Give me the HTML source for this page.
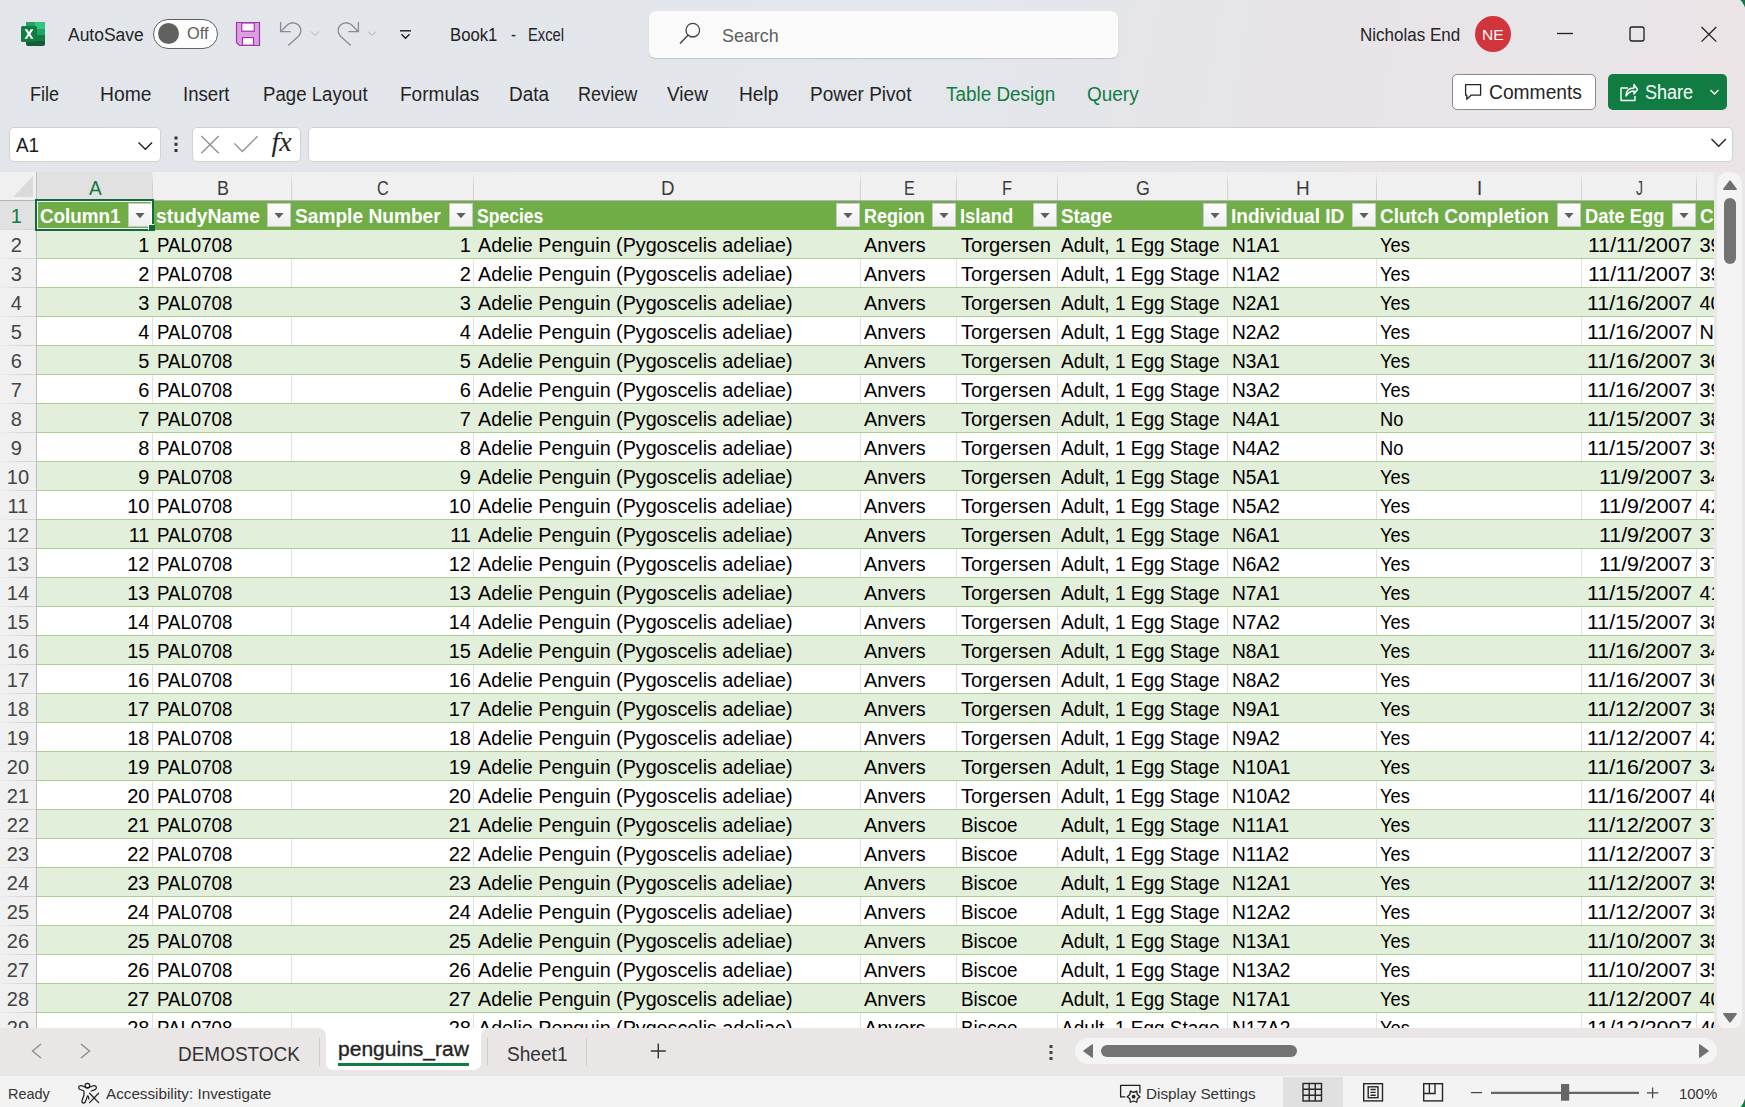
<!DOCTYPE html>
<html><head><meta charset="utf-8">
<style>
html,body{margin:0;padding:0;}
body{width:1745px;height:1107px;overflow:hidden;position:relative;background:#fff;font-family:"Liberation Sans",sans-serif;}
.t{position:absolute;white-space:nowrap;line-height:1;}
.r{position:absolute;}
svg{position:absolute;overflow:visible;}
</style></head><body>

<div class="r" style="left:0;top:0;width:1745px;height:172px;background:linear-gradient(100deg,#e2e5ea 0%,#e3e6eb 55%,#e8e4e8 80%,#eae4e7 100%);"></div>
<svg style="left:0;top:0" width="60" height="60">
<rect x="26" y="22" width="19" height="24" rx="2" fill="#185c37"/>
<rect x="26" y="22" width="19" height="7" rx="2" fill="#33c481"/>
<rect x="26" y="26" width="19" height="3" fill="#33c481"/>
<rect x="26" y="22" width="9" height="7" fill="#21a366"/>
<rect x="26" y="29" width="19" height="6" fill="#21a366"/>
<rect x="26" y="35" width="19" height="6" fill="#107c41"/>
<rect x="21" y="26" width="16" height="16" rx="1.5" fill="#107c41"/>
<path d="M24.6 29.3 L27.3 29.3 L29 32.3 L30.7 29.3 L33.4 29.3 L30.4 34 L33.5 38.7 L30.8 38.7 L29 35.6 L27.2 38.7 L24.5 38.7 L27.6 34 Z" fill="#fff"/>
</svg>
<div class="t" style="top:25.66px;font-size:18px;color:#242424;left:68.30px;transform:scaleX(0.9699);transform-origin:0 0;">AutoSave</div>
<div class="r" style="left:153px;top:19px;width:63px;height:28px;border:1px solid #606060;border-radius:15px;background:#fdfdfd;"></div>
<div class="r" style="left:158px;top:23px;width:21px;height:21px;border-radius:50%;background:#616161;"></div>
<div class="t" style="top:26.06px;font-size:16px;color:#5c5c5c;left:186.50px;transform:scaleX(1.0195);transform-origin:0 0;">Off</div>
<svg style="left:0;top:0" width="1" height="1">
<path d="M236.5 22.5 H259.5 V45.5 H239.5 L236.5 42.5 Z" fill="#d99fe0" stroke="#a233a8" stroke-width="1.2"/>
<rect x="241.7" y="23" width="12.6" height="8.2" fill="#fafafa" stroke="#a233a8" stroke-width="1.2"/>
<rect x="242.5" y="37.6" width="11" height="7.6" fill="#fafafa" stroke="#a233a8" stroke-width="1.2"/>
</svg>
<svg style="left:0;top:0" width="1" height="1">
<g fill="none" stroke="#8c8c8c" stroke-width="1.3">
<path d="M280.6 22 V31.7 H290.6"/>
<path d="M281 31.3 L287 25.3 C290.5 21.8 296 22 299 25.5 C302 29 301.2 33.5 298.5 36.2 L288.2 45.6"/>
<path d="M358.4 22 V31.7 H348.4"/>
<path d="M358 31.3 L352 25.3 C348.5 21.8 343 22 340 25.5 C337 29 337.8 33.5 340.5 36.2 L350.8 45.6"/>
</g>
<g fill="none" stroke="#b0b0b0" stroke-width="1">
<path d="M311 31.5 L315 35.5 L319 31.5"/>
<path d="M368 31.5 L372 35.5 L376 31.5"/>
</g>
<g fill="none" stroke="#1a1a1a" stroke-width="1.4">
<path d="M400 30.8 H411"/>
<path d="M401.5 34.2 L405.5 38.2 L409.5 34.2"/>
</g>
</svg>
<div class="t" style="top:24.92px;font-size:19px;color:#242424;left:450.00px;transform:scaleX(0.8800);transform-origin:0 0;">Book1</div>
<div class="t" style="top:24.92px;font-size:19px;color:#242424;left:511.00px;transform:scaleX(0.7903);transform-origin:0 0;">-</div>
<div class="t" style="top:24.92px;font-size:19px;color:#242424;left:528.30px;transform:scaleX(0.7771);transform-origin:0 0;">Excel</div>
<div class="r" style="left:649px;top:11px;width:469px;height:46.5px;background:#fafafa;border-radius:6px;box-shadow:0 1px 1px rgba(0,0,0,0.16),0 0 0.5px rgba(0,0,0,0.18);"></div>
<svg style="left:0;top:0" width="1" height="1">
<circle cx="692.8" cy="30.2" r="6.8" fill="none" stroke="#444" stroke-width="1.3"/>
<path d="M688 35.2 L680 43.6" stroke="#444" stroke-width="1.4" fill="none"/>
</svg>
<div class="t" style="top:25.82px;font-size:19px;color:#5e5e5e;left:722.00px;transform:scaleX(0.9420);transform-origin:0 0;">Search</div>
<div class="t" style="top:25.12px;font-size:19px;color:#242424;left:1359.70px;transform:scaleX(0.8942);transform-origin:0 0;">Nicholas End</div>
<div class="r" style="left:1475px;top:16px;width:36px;height:36px;border-radius:50%;background:#d1343a;"></div>
<div class="t" style="top:26.90px;font-size:15px;color:#fff;left:1482.20px;transform:scaleX(1.0367);transform-origin:0 0;">NE</div>
<svg style="left:0;top:0" width="1" height="1">
<path d="M1557 33.5 H1573" stroke="#1f1f1f" stroke-width="1.3"/>
<rect x="1630" y="27" width="14" height="14" rx="2" fill="none" stroke="#1f1f1f" stroke-width="1.3"/>
<path d="M1701.5 27 L1716.3 41.6 M1716.3 27 L1701.5 41.6" stroke="#1f1f1f" stroke-width="1.3"/>
</svg>
<div class="t" style="top:84.17px;font-size:20px;color:#242424;left:30.00px;transform:scaleX(0.9001);transform-origin:0 0;">File</div>
<div class="t" style="top:84.17px;font-size:20px;color:#242424;left:99.50px;transform:scaleX(0.9651);transform-origin:0 0;">Home</div>
<div class="t" style="top:84.17px;font-size:20px;color:#242424;left:182.50px;transform:scaleX(0.9296);transform-origin:0 0;">Insert</div>
<div class="t" style="top:84.17px;font-size:20px;color:#242424;left:262.70px;transform:scaleX(0.9313);transform-origin:0 0;">Page Layout</div>
<div class="t" style="top:84.17px;font-size:20px;color:#242424;left:399.70px;transform:scaleX(0.9513);transform-origin:0 0;">Formulas</div>
<div class="t" style="top:84.17px;font-size:20px;color:#242424;left:508.50px;transform:scaleX(0.9465);transform-origin:0 0;">Data</div>
<div class="t" style="top:84.17px;font-size:20px;color:#242424;left:577.70px;transform:scaleX(0.9034);transform-origin:0 0;">Review</div>
<div class="t" style="top:84.17px;font-size:20px;color:#242424;left:667.30px;transform:scaleX(0.9503);transform-origin:0 0;">View</div>
<div class="t" style="top:84.17px;font-size:20px;color:#242424;left:739.00px;transform:scaleX(0.9577);transform-origin:0 0;">Help</div>
<div class="t" style="top:84.17px;font-size:20px;color:#242424;left:810.00px;transform:scaleX(0.9503);transform-origin:0 0;">Power Pivot</div>
<div class="t" style="top:84.17px;font-size:20px;color:#107c41;left:945.50px;transform:scaleX(0.9453);transform-origin:0 0;">Table Design</div>
<div class="t" style="top:84.17px;font-size:20px;color:#107c41;left:1086.80px;transform:scaleX(0.9475);transform-origin:0 0;">Query</div>
<div class="r" style="left:1452px;top:74px;width:142px;height:34px;border:1px solid #8a8a8a;border-radius:5px;background:#fff;"></div>
<svg style="left:0;top:0" width="1" height="1">
<path d="M1465.6 84.6 H1480.6 V95.2 H1471 L1466.8 99.2 V95.2 H1465.6 Z" fill="none" stroke="#242424" stroke-width="1.3" stroke-linejoin="round"/>
</svg>
<div class="t" style="top:83.09px;font-size:19.5px;color:#242424;left:1488.60px;transform:scaleX(0.9864);transform-origin:0 0;">Comments</div>
<div class="r" style="left:1608px;top:74px;width:119px;height:36px;border-radius:5px;background:#107c41;"></div>
<svg style="left:0;top:0" width="1" height="1">
<g fill="none" stroke="#fff" stroke-width="1.4" stroke-linejoin="round">
<path d="M1628 88 H1621 V100.5 H1635 V96"/>
<path d="M1626 96 C1626 90 1630 88 1634 88 V84.5 L1637.5 89.5 L1634 94 V91 C1630.5 91 1628 93 1626 96 Z"/>
</g>
<path d="M1710.5 90 L1714.5 94 L1718.5 90" fill="none" stroke="#fff" stroke-width="1.4"/>
</svg>
<div class="t" style="top:83.09px;font-size:19.5px;color:#fff;left:1644.50px;transform:scaleX(0.9245);transform-origin:0 0;">Share</div>
<div class="r" style="left:9px;top:127px;width:150px;height:33px;border:1px solid #d2d2d2;border-radius:5px;background:#fff;"></div>
<div class="t" style="top:134.97px;font-size:20px;color:#1a1a1a;left:16.00px;transform:scaleX(0.9444);transform-origin:0 0;">A1</div>
<svg style="left:0;top:0" width="1" height="1">
<path d="M138.5 142.5 L145.3 149.3 L152.1 142.5" fill="none" stroke="#242424" stroke-width="1.4"/>
<rect x="174.5" y="136.5" width="3" height="3" fill="#333"/>
<rect x="174.5" y="142.8" width="3" height="3" fill="#333"/>
<rect x="174.5" y="149" width="3" height="3" fill="#333"/>
</svg>
<div class="r" style="left:192px;top:127px;width:107px;height:33px;border:1px solid #d2d2d2;border-radius:5px;background:#fff;"></div>
<svg style="left:0;top:0" width="1" height="1">
<path d="M201.3 136 L218.8 153.3 M218.8 136 L201.3 153.3" stroke="#8f8f8f" stroke-width="1.3"/>
<path d="M234.3 143.4 L242.3 151.5 L257.6 136.2" fill="none" stroke="#8f8f8f" stroke-width="1.3"/>
</svg>
<div class="t" style="left:271.5px;top:127.7px;font-family:'Liberation Serif',serif;font-style:italic;font-size:28px;color:#242424;">fx</div>
<div class="r" style="left:308px;top:127px;width:1423px;height:33px;border:1px solid #d2d2d2;border-radius:5px;background:#fff;"></div>
<svg style="left:0;top:0" width="1" height="1">
<path d="M1711.5 139 L1718.7 146.2 L1725.9 139" fill="none" stroke="#242424" stroke-width="1.4"/>
</svg>
<div class="r" style="left:0;top:172px;width:1714px;height:856px;background:#fff;overflow:hidden;">
<div class="r" style="left:0;top:-172px;width:1745px;height:1107px;">
<div class="r" style="left:0px;top:172px;width:1714px;height:28px;background:#f0f0f0;"></div>
<div class="r" style="left:36px;top:172px;width:116px;height:28px;background:#e1e1e1;"></div>
<div class="r" style="left:0px;top:200px;width:1714px;height:1px;background:#b4b4b4;"></div>
<div class="r" style="left:0px;top:201px;width:36px;height:827px;background:#f0f0f0;"></div>
<div class="r" style="left:0px;top:201px;width:36px;height:29px;background:#e1e1e1;"></div>
<svg style="left:0;top:0" width="1" height="1"><path d="M13 197 L33 197 L33 176 Z" fill="#dadada"/></svg>
<div class="r" style="left:152px;top:172px;width:1px;height:28px;background:linear-gradient(rgba(210,210,210,0),#d2d2d2 45%);"></div>
<div class="r" style="left:291px;top:172px;width:1px;height:28px;background:linear-gradient(rgba(210,210,210,0),#d2d2d2 45%);"></div>
<div class="r" style="left:473px;top:172px;width:1px;height:28px;background:linear-gradient(rgba(210,210,210,0),#d2d2d2 45%);"></div>
<div class="r" style="left:860px;top:172px;width:1px;height:28px;background:linear-gradient(rgba(210,210,210,0),#d2d2d2 45%);"></div>
<div class="r" style="left:956px;top:172px;width:1px;height:28px;background:linear-gradient(rgba(210,210,210,0),#d2d2d2 45%);"></div>
<div class="r" style="left:1057px;top:172px;width:1px;height:28px;background:linear-gradient(rgba(210,210,210,0),#d2d2d2 45%);"></div>
<div class="r" style="left:1227px;top:172px;width:1px;height:28px;background:linear-gradient(rgba(210,210,210,0),#d2d2d2 45%);"></div>
<div class="r" style="left:1376px;top:172px;width:1px;height:28px;background:linear-gradient(rgba(210,210,210,0),#d2d2d2 45%);"></div>
<div class="r" style="left:1581px;top:172px;width:1px;height:28px;background:linear-gradient(rgba(210,210,210,0),#d2d2d2 45%);"></div>
<div class="r" style="left:1696px;top:172px;width:1px;height:28px;background:linear-gradient(rgba(210,210,210,0),#d2d2d2 45%);"></div>
<div class="r" style="left:36px;top:172px;width:1px;height:856px;background:#bdbdbd;"></div>
<div class="t" style="top:177.87px;font-size:20px;color:#107c41;left:88.63px;transform:scaleX(0.9549);transform-origin:0 0;">A</div>
<div class="t" style="top:177.87px;font-size:20px;color:#3c3c3c;left:216.52px;transform:scaleX(0.8972);transform-origin:0 0;">B</div>
<div class="t" style="top:177.87px;font-size:20px;color:#3c3c3c;left:377.14px;transform:scaleX(0.8119);transform-origin:0 0;">C</div>
<div class="t" style="top:177.87px;font-size:20px;color:#3c3c3c;left:660.74px;transform:scaleX(0.9368);transform-origin:0 0;">D</div>
<div class="t" style="top:177.87px;font-size:20px;color:#3c3c3c;left:903.63px;transform:scaleX(0.8048);transform-origin:0 0;">E</div>
<div class="t" style="top:177.87px;font-size:20px;color:#3c3c3c;left:1002.45px;transform:scaleX(0.8266);transform-origin:0 0;">F</div>
<div class="t" style="top:177.87px;font-size:20px;color:#3c3c3c;left:1136.06px;transform:scaleX(0.8924);transform-origin:0 0;">G</div>
<div class="t" style="top:177.87px;font-size:20px;color:#3c3c3c;left:1295.65px;transform:scaleX(0.9489);transform-origin:0 0;">H</div>
<div class="t" style="top:177.87px;font-size:20px;color:#3c3c3c;left:1476.73px;">I</div>
<div class="t" style="top:177.87px;font-size:20px;color:#3c3c3c;left:1635.99px;transform:scaleX(0.7018);transform-origin:0 0;">J</div>
<div class="r" style="left:0px;top:229px;width:36px;height:1px;background:linear-gradient(90deg,rgba(212,212,212,0.15),#d4d4d4 70%);"></div>
<div class="t" style="top:206.07px;font-size:20px;color:#107c41;left:10.84px;">1</div>
<div class="r" style="left:37px;top:201px;width:1677px;height:29px;background:#70ad47;"></div>
<div class="r" style="left:0px;top:258px;width:36px;height:1px;background:linear-gradient(90deg,rgba(212,212,212,0.15),#d4d4d4 70%);"></div>
<div class="t" style="top:235.07px;font-size:20px;color:#444444;left:10.84px;">2</div>
<div class="r" style="left:37px;top:230px;width:1677px;height:28px;background:#e2efda;"></div>
<div class="r" style="left:37px;top:258px;width:1677px;height:1px;background:#a9d08e;"></div>
<div class="r" style="left:0px;top:287px;width:36px;height:1px;background:linear-gradient(90deg,rgba(212,212,212,0.15),#d4d4d4 70%);"></div>
<div class="t" style="top:264.07px;font-size:20px;color:#444444;left:10.84px;">3</div>
<div class="r" style="left:37px;top:259px;width:1677px;height:28px;background:#ffffff;"></div>
<div class="r" style="left:37px;top:287px;width:1677px;height:1px;background:#a9d08e;"></div>
<div class="r" style="left:152px;top:259px;width:1px;height:28px;background:#e1e1e1;"></div>
<div class="r" style="left:291px;top:259px;width:1px;height:28px;background:#e1e1e1;"></div>
<div class="r" style="left:473px;top:259px;width:1px;height:28px;background:#e1e1e1;"></div>
<div class="r" style="left:860px;top:259px;width:1px;height:28px;background:#e1e1e1;"></div>
<div class="r" style="left:956px;top:259px;width:1px;height:28px;background:#e1e1e1;"></div>
<div class="r" style="left:1057px;top:259px;width:1px;height:28px;background:#e1e1e1;"></div>
<div class="r" style="left:1227px;top:259px;width:1px;height:28px;background:#e1e1e1;"></div>
<div class="r" style="left:1376px;top:259px;width:1px;height:28px;background:#e1e1e1;"></div>
<div class="r" style="left:1581px;top:259px;width:1px;height:28px;background:#e1e1e1;"></div>
<div class="r" style="left:1696px;top:259px;width:1px;height:28px;background:#e1e1e1;"></div>
<div class="r" style="left:0px;top:316px;width:36px;height:1px;background:linear-gradient(90deg,rgba(212,212,212,0.15),#d4d4d4 70%);"></div>
<div class="t" style="top:293.07px;font-size:20px;color:#444444;left:10.84px;">4</div>
<div class="r" style="left:37px;top:288px;width:1677px;height:28px;background:#e2efda;"></div>
<div class="r" style="left:37px;top:316px;width:1677px;height:1px;background:#a9d08e;"></div>
<div class="r" style="left:0px;top:345px;width:36px;height:1px;background:linear-gradient(90deg,rgba(212,212,212,0.15),#d4d4d4 70%);"></div>
<div class="t" style="top:322.07px;font-size:20px;color:#444444;left:10.84px;">5</div>
<div class="r" style="left:37px;top:317px;width:1677px;height:28px;background:#ffffff;"></div>
<div class="r" style="left:37px;top:345px;width:1677px;height:1px;background:#a9d08e;"></div>
<div class="r" style="left:152px;top:317px;width:1px;height:28px;background:#e1e1e1;"></div>
<div class="r" style="left:291px;top:317px;width:1px;height:28px;background:#e1e1e1;"></div>
<div class="r" style="left:473px;top:317px;width:1px;height:28px;background:#e1e1e1;"></div>
<div class="r" style="left:860px;top:317px;width:1px;height:28px;background:#e1e1e1;"></div>
<div class="r" style="left:956px;top:317px;width:1px;height:28px;background:#e1e1e1;"></div>
<div class="r" style="left:1057px;top:317px;width:1px;height:28px;background:#e1e1e1;"></div>
<div class="r" style="left:1227px;top:317px;width:1px;height:28px;background:#e1e1e1;"></div>
<div class="r" style="left:1376px;top:317px;width:1px;height:28px;background:#e1e1e1;"></div>
<div class="r" style="left:1581px;top:317px;width:1px;height:28px;background:#e1e1e1;"></div>
<div class="r" style="left:1696px;top:317px;width:1px;height:28px;background:#e1e1e1;"></div>
<div class="r" style="left:0px;top:374px;width:36px;height:1px;background:linear-gradient(90deg,rgba(212,212,212,0.15),#d4d4d4 70%);"></div>
<div class="t" style="top:351.07px;font-size:20px;color:#444444;left:10.84px;">6</div>
<div class="r" style="left:37px;top:346px;width:1677px;height:28px;background:#e2efda;"></div>
<div class="r" style="left:37px;top:374px;width:1677px;height:1px;background:#a9d08e;"></div>
<div class="r" style="left:0px;top:403px;width:36px;height:1px;background:linear-gradient(90deg,rgba(212,212,212,0.15),#d4d4d4 70%);"></div>
<div class="t" style="top:380.07px;font-size:20px;color:#444444;left:10.84px;">7</div>
<div class="r" style="left:37px;top:375px;width:1677px;height:28px;background:#ffffff;"></div>
<div class="r" style="left:37px;top:403px;width:1677px;height:1px;background:#a9d08e;"></div>
<div class="r" style="left:152px;top:375px;width:1px;height:28px;background:#e1e1e1;"></div>
<div class="r" style="left:291px;top:375px;width:1px;height:28px;background:#e1e1e1;"></div>
<div class="r" style="left:473px;top:375px;width:1px;height:28px;background:#e1e1e1;"></div>
<div class="r" style="left:860px;top:375px;width:1px;height:28px;background:#e1e1e1;"></div>
<div class="r" style="left:956px;top:375px;width:1px;height:28px;background:#e1e1e1;"></div>
<div class="r" style="left:1057px;top:375px;width:1px;height:28px;background:#e1e1e1;"></div>
<div class="r" style="left:1227px;top:375px;width:1px;height:28px;background:#e1e1e1;"></div>
<div class="r" style="left:1376px;top:375px;width:1px;height:28px;background:#e1e1e1;"></div>
<div class="r" style="left:1581px;top:375px;width:1px;height:28px;background:#e1e1e1;"></div>
<div class="r" style="left:1696px;top:375px;width:1px;height:28px;background:#e1e1e1;"></div>
<div class="r" style="left:0px;top:432px;width:36px;height:1px;background:linear-gradient(90deg,rgba(212,212,212,0.15),#d4d4d4 70%);"></div>
<div class="t" style="top:409.07px;font-size:20px;color:#444444;left:10.84px;">8</div>
<div class="r" style="left:37px;top:404px;width:1677px;height:28px;background:#e2efda;"></div>
<div class="r" style="left:37px;top:432px;width:1677px;height:1px;background:#a9d08e;"></div>
<div class="r" style="left:0px;top:461px;width:36px;height:1px;background:linear-gradient(90deg,rgba(212,212,212,0.15),#d4d4d4 70%);"></div>
<div class="t" style="top:438.07px;font-size:20px;color:#444444;left:10.84px;">9</div>
<div class="r" style="left:37px;top:433px;width:1677px;height:28px;background:#ffffff;"></div>
<div class="r" style="left:37px;top:461px;width:1677px;height:1px;background:#a9d08e;"></div>
<div class="r" style="left:152px;top:433px;width:1px;height:28px;background:#e1e1e1;"></div>
<div class="r" style="left:291px;top:433px;width:1px;height:28px;background:#e1e1e1;"></div>
<div class="r" style="left:473px;top:433px;width:1px;height:28px;background:#e1e1e1;"></div>
<div class="r" style="left:860px;top:433px;width:1px;height:28px;background:#e1e1e1;"></div>
<div class="r" style="left:956px;top:433px;width:1px;height:28px;background:#e1e1e1;"></div>
<div class="r" style="left:1057px;top:433px;width:1px;height:28px;background:#e1e1e1;"></div>
<div class="r" style="left:1227px;top:433px;width:1px;height:28px;background:#e1e1e1;"></div>
<div class="r" style="left:1376px;top:433px;width:1px;height:28px;background:#e1e1e1;"></div>
<div class="r" style="left:1581px;top:433px;width:1px;height:28px;background:#e1e1e1;"></div>
<div class="r" style="left:1696px;top:433px;width:1px;height:28px;background:#e1e1e1;"></div>
<div class="r" style="left:0px;top:490px;width:36px;height:1px;background:linear-gradient(90deg,rgba(212,212,212,0.15),#d4d4d4 70%);"></div>
<div class="t" style="top:467.07px;font-size:20px;color:#444444;left:6.78px;">10</div>
<div class="r" style="left:37px;top:462px;width:1677px;height:28px;background:#e2efda;"></div>
<div class="r" style="left:37px;top:490px;width:1677px;height:1px;background:#a9d08e;"></div>
<div class="r" style="left:0px;top:519px;width:36px;height:1px;background:linear-gradient(90deg,rgba(212,212,212,0.15),#d4d4d4 70%);"></div>
<div class="t" style="top:496.07px;font-size:20px;color:#444444;left:7.52px;">11</div>
<div class="r" style="left:37px;top:491px;width:1677px;height:28px;background:#ffffff;"></div>
<div class="r" style="left:37px;top:519px;width:1677px;height:1px;background:#a9d08e;"></div>
<div class="r" style="left:152px;top:491px;width:1px;height:28px;background:#e1e1e1;"></div>
<div class="r" style="left:291px;top:491px;width:1px;height:28px;background:#e1e1e1;"></div>
<div class="r" style="left:473px;top:491px;width:1px;height:28px;background:#e1e1e1;"></div>
<div class="r" style="left:860px;top:491px;width:1px;height:28px;background:#e1e1e1;"></div>
<div class="r" style="left:956px;top:491px;width:1px;height:28px;background:#e1e1e1;"></div>
<div class="r" style="left:1057px;top:491px;width:1px;height:28px;background:#e1e1e1;"></div>
<div class="r" style="left:1227px;top:491px;width:1px;height:28px;background:#e1e1e1;"></div>
<div class="r" style="left:1376px;top:491px;width:1px;height:28px;background:#e1e1e1;"></div>
<div class="r" style="left:1581px;top:491px;width:1px;height:28px;background:#e1e1e1;"></div>
<div class="r" style="left:1696px;top:491px;width:1px;height:28px;background:#e1e1e1;"></div>
<div class="r" style="left:0px;top:548px;width:36px;height:1px;background:linear-gradient(90deg,rgba(212,212,212,0.15),#d4d4d4 70%);"></div>
<div class="t" style="top:525.07px;font-size:20px;color:#444444;left:6.78px;">12</div>
<div class="r" style="left:37px;top:520px;width:1677px;height:28px;background:#e2efda;"></div>
<div class="r" style="left:37px;top:548px;width:1677px;height:1px;background:#a9d08e;"></div>
<div class="r" style="left:0px;top:577px;width:36px;height:1px;background:linear-gradient(90deg,rgba(212,212,212,0.15),#d4d4d4 70%);"></div>
<div class="t" style="top:554.07px;font-size:20px;color:#444444;left:6.78px;">13</div>
<div class="r" style="left:37px;top:549px;width:1677px;height:28px;background:#ffffff;"></div>
<div class="r" style="left:37px;top:577px;width:1677px;height:1px;background:#a9d08e;"></div>
<div class="r" style="left:152px;top:549px;width:1px;height:28px;background:#e1e1e1;"></div>
<div class="r" style="left:291px;top:549px;width:1px;height:28px;background:#e1e1e1;"></div>
<div class="r" style="left:473px;top:549px;width:1px;height:28px;background:#e1e1e1;"></div>
<div class="r" style="left:860px;top:549px;width:1px;height:28px;background:#e1e1e1;"></div>
<div class="r" style="left:956px;top:549px;width:1px;height:28px;background:#e1e1e1;"></div>
<div class="r" style="left:1057px;top:549px;width:1px;height:28px;background:#e1e1e1;"></div>
<div class="r" style="left:1227px;top:549px;width:1px;height:28px;background:#e1e1e1;"></div>
<div class="r" style="left:1376px;top:549px;width:1px;height:28px;background:#e1e1e1;"></div>
<div class="r" style="left:1581px;top:549px;width:1px;height:28px;background:#e1e1e1;"></div>
<div class="r" style="left:1696px;top:549px;width:1px;height:28px;background:#e1e1e1;"></div>
<div class="r" style="left:0px;top:606px;width:36px;height:1px;background:linear-gradient(90deg,rgba(212,212,212,0.15),#d4d4d4 70%);"></div>
<div class="t" style="top:583.07px;font-size:20px;color:#444444;left:6.78px;">14</div>
<div class="r" style="left:37px;top:578px;width:1677px;height:28px;background:#e2efda;"></div>
<div class="r" style="left:37px;top:606px;width:1677px;height:1px;background:#a9d08e;"></div>
<div class="r" style="left:0px;top:635px;width:36px;height:1px;background:linear-gradient(90deg,rgba(212,212,212,0.15),#d4d4d4 70%);"></div>
<div class="t" style="top:612.07px;font-size:20px;color:#444444;left:6.78px;">15</div>
<div class="r" style="left:37px;top:607px;width:1677px;height:28px;background:#ffffff;"></div>
<div class="r" style="left:37px;top:635px;width:1677px;height:1px;background:#a9d08e;"></div>
<div class="r" style="left:152px;top:607px;width:1px;height:28px;background:#e1e1e1;"></div>
<div class="r" style="left:291px;top:607px;width:1px;height:28px;background:#e1e1e1;"></div>
<div class="r" style="left:473px;top:607px;width:1px;height:28px;background:#e1e1e1;"></div>
<div class="r" style="left:860px;top:607px;width:1px;height:28px;background:#e1e1e1;"></div>
<div class="r" style="left:956px;top:607px;width:1px;height:28px;background:#e1e1e1;"></div>
<div class="r" style="left:1057px;top:607px;width:1px;height:28px;background:#e1e1e1;"></div>
<div class="r" style="left:1227px;top:607px;width:1px;height:28px;background:#e1e1e1;"></div>
<div class="r" style="left:1376px;top:607px;width:1px;height:28px;background:#e1e1e1;"></div>
<div class="r" style="left:1581px;top:607px;width:1px;height:28px;background:#e1e1e1;"></div>
<div class="r" style="left:1696px;top:607px;width:1px;height:28px;background:#e1e1e1;"></div>
<div class="r" style="left:0px;top:664px;width:36px;height:1px;background:linear-gradient(90deg,rgba(212,212,212,0.15),#d4d4d4 70%);"></div>
<div class="t" style="top:641.07px;font-size:20px;color:#444444;left:6.78px;">16</div>
<div class="r" style="left:37px;top:636px;width:1677px;height:28px;background:#e2efda;"></div>
<div class="r" style="left:37px;top:664px;width:1677px;height:1px;background:#a9d08e;"></div>
<div class="r" style="left:0px;top:693px;width:36px;height:1px;background:linear-gradient(90deg,rgba(212,212,212,0.15),#d4d4d4 70%);"></div>
<div class="t" style="top:670.07px;font-size:20px;color:#444444;left:6.78px;">17</div>
<div class="r" style="left:37px;top:665px;width:1677px;height:28px;background:#ffffff;"></div>
<div class="r" style="left:37px;top:693px;width:1677px;height:1px;background:#a9d08e;"></div>
<div class="r" style="left:152px;top:665px;width:1px;height:28px;background:#e1e1e1;"></div>
<div class="r" style="left:291px;top:665px;width:1px;height:28px;background:#e1e1e1;"></div>
<div class="r" style="left:473px;top:665px;width:1px;height:28px;background:#e1e1e1;"></div>
<div class="r" style="left:860px;top:665px;width:1px;height:28px;background:#e1e1e1;"></div>
<div class="r" style="left:956px;top:665px;width:1px;height:28px;background:#e1e1e1;"></div>
<div class="r" style="left:1057px;top:665px;width:1px;height:28px;background:#e1e1e1;"></div>
<div class="r" style="left:1227px;top:665px;width:1px;height:28px;background:#e1e1e1;"></div>
<div class="r" style="left:1376px;top:665px;width:1px;height:28px;background:#e1e1e1;"></div>
<div class="r" style="left:1581px;top:665px;width:1px;height:28px;background:#e1e1e1;"></div>
<div class="r" style="left:1696px;top:665px;width:1px;height:28px;background:#e1e1e1;"></div>
<div class="r" style="left:0px;top:722px;width:36px;height:1px;background:linear-gradient(90deg,rgba(212,212,212,0.15),#d4d4d4 70%);"></div>
<div class="t" style="top:699.07px;font-size:20px;color:#444444;left:6.78px;">18</div>
<div class="r" style="left:37px;top:694px;width:1677px;height:28px;background:#e2efda;"></div>
<div class="r" style="left:37px;top:722px;width:1677px;height:1px;background:#a9d08e;"></div>
<div class="r" style="left:0px;top:751px;width:36px;height:1px;background:linear-gradient(90deg,rgba(212,212,212,0.15),#d4d4d4 70%);"></div>
<div class="t" style="top:728.07px;font-size:20px;color:#444444;left:6.78px;">19</div>
<div class="r" style="left:37px;top:723px;width:1677px;height:28px;background:#ffffff;"></div>
<div class="r" style="left:37px;top:751px;width:1677px;height:1px;background:#a9d08e;"></div>
<div class="r" style="left:152px;top:723px;width:1px;height:28px;background:#e1e1e1;"></div>
<div class="r" style="left:291px;top:723px;width:1px;height:28px;background:#e1e1e1;"></div>
<div class="r" style="left:473px;top:723px;width:1px;height:28px;background:#e1e1e1;"></div>
<div class="r" style="left:860px;top:723px;width:1px;height:28px;background:#e1e1e1;"></div>
<div class="r" style="left:956px;top:723px;width:1px;height:28px;background:#e1e1e1;"></div>
<div class="r" style="left:1057px;top:723px;width:1px;height:28px;background:#e1e1e1;"></div>
<div class="r" style="left:1227px;top:723px;width:1px;height:28px;background:#e1e1e1;"></div>
<div class="r" style="left:1376px;top:723px;width:1px;height:28px;background:#e1e1e1;"></div>
<div class="r" style="left:1581px;top:723px;width:1px;height:28px;background:#e1e1e1;"></div>
<div class="r" style="left:1696px;top:723px;width:1px;height:28px;background:#e1e1e1;"></div>
<div class="r" style="left:0px;top:780px;width:36px;height:1px;background:linear-gradient(90deg,rgba(212,212,212,0.15),#d4d4d4 70%);"></div>
<div class="t" style="top:757.07px;font-size:20px;color:#444444;left:6.78px;">20</div>
<div class="r" style="left:37px;top:752px;width:1677px;height:28px;background:#e2efda;"></div>
<div class="r" style="left:37px;top:780px;width:1677px;height:1px;background:#a9d08e;"></div>
<div class="r" style="left:0px;top:809px;width:36px;height:1px;background:linear-gradient(90deg,rgba(212,212,212,0.15),#d4d4d4 70%);"></div>
<div class="t" style="top:786.07px;font-size:20px;color:#444444;left:6.78px;">21</div>
<div class="r" style="left:37px;top:781px;width:1677px;height:28px;background:#ffffff;"></div>
<div class="r" style="left:37px;top:809px;width:1677px;height:1px;background:#a9d08e;"></div>
<div class="r" style="left:152px;top:781px;width:1px;height:28px;background:#e1e1e1;"></div>
<div class="r" style="left:291px;top:781px;width:1px;height:28px;background:#e1e1e1;"></div>
<div class="r" style="left:473px;top:781px;width:1px;height:28px;background:#e1e1e1;"></div>
<div class="r" style="left:860px;top:781px;width:1px;height:28px;background:#e1e1e1;"></div>
<div class="r" style="left:956px;top:781px;width:1px;height:28px;background:#e1e1e1;"></div>
<div class="r" style="left:1057px;top:781px;width:1px;height:28px;background:#e1e1e1;"></div>
<div class="r" style="left:1227px;top:781px;width:1px;height:28px;background:#e1e1e1;"></div>
<div class="r" style="left:1376px;top:781px;width:1px;height:28px;background:#e1e1e1;"></div>
<div class="r" style="left:1581px;top:781px;width:1px;height:28px;background:#e1e1e1;"></div>
<div class="r" style="left:1696px;top:781px;width:1px;height:28px;background:#e1e1e1;"></div>
<div class="r" style="left:0px;top:838px;width:36px;height:1px;background:linear-gradient(90deg,rgba(212,212,212,0.15),#d4d4d4 70%);"></div>
<div class="t" style="top:815.07px;font-size:20px;color:#444444;left:6.78px;">22</div>
<div class="r" style="left:37px;top:810px;width:1677px;height:28px;background:#e2efda;"></div>
<div class="r" style="left:37px;top:838px;width:1677px;height:1px;background:#a9d08e;"></div>
<div class="r" style="left:0px;top:867px;width:36px;height:1px;background:linear-gradient(90deg,rgba(212,212,212,0.15),#d4d4d4 70%);"></div>
<div class="t" style="top:844.07px;font-size:20px;color:#444444;left:6.78px;">23</div>
<div class="r" style="left:37px;top:839px;width:1677px;height:28px;background:#ffffff;"></div>
<div class="r" style="left:37px;top:867px;width:1677px;height:1px;background:#a9d08e;"></div>
<div class="r" style="left:152px;top:839px;width:1px;height:28px;background:#e1e1e1;"></div>
<div class="r" style="left:291px;top:839px;width:1px;height:28px;background:#e1e1e1;"></div>
<div class="r" style="left:473px;top:839px;width:1px;height:28px;background:#e1e1e1;"></div>
<div class="r" style="left:860px;top:839px;width:1px;height:28px;background:#e1e1e1;"></div>
<div class="r" style="left:956px;top:839px;width:1px;height:28px;background:#e1e1e1;"></div>
<div class="r" style="left:1057px;top:839px;width:1px;height:28px;background:#e1e1e1;"></div>
<div class="r" style="left:1227px;top:839px;width:1px;height:28px;background:#e1e1e1;"></div>
<div class="r" style="left:1376px;top:839px;width:1px;height:28px;background:#e1e1e1;"></div>
<div class="r" style="left:1581px;top:839px;width:1px;height:28px;background:#e1e1e1;"></div>
<div class="r" style="left:1696px;top:839px;width:1px;height:28px;background:#e1e1e1;"></div>
<div class="r" style="left:0px;top:896px;width:36px;height:1px;background:linear-gradient(90deg,rgba(212,212,212,0.15),#d4d4d4 70%);"></div>
<div class="t" style="top:873.07px;font-size:20px;color:#444444;left:6.78px;">24</div>
<div class="r" style="left:37px;top:868px;width:1677px;height:28px;background:#e2efda;"></div>
<div class="r" style="left:37px;top:896px;width:1677px;height:1px;background:#a9d08e;"></div>
<div class="r" style="left:0px;top:925px;width:36px;height:1px;background:linear-gradient(90deg,rgba(212,212,212,0.15),#d4d4d4 70%);"></div>
<div class="t" style="top:902.07px;font-size:20px;color:#444444;left:6.78px;">25</div>
<div class="r" style="left:37px;top:897px;width:1677px;height:28px;background:#ffffff;"></div>
<div class="r" style="left:37px;top:925px;width:1677px;height:1px;background:#a9d08e;"></div>
<div class="r" style="left:152px;top:897px;width:1px;height:28px;background:#e1e1e1;"></div>
<div class="r" style="left:291px;top:897px;width:1px;height:28px;background:#e1e1e1;"></div>
<div class="r" style="left:473px;top:897px;width:1px;height:28px;background:#e1e1e1;"></div>
<div class="r" style="left:860px;top:897px;width:1px;height:28px;background:#e1e1e1;"></div>
<div class="r" style="left:956px;top:897px;width:1px;height:28px;background:#e1e1e1;"></div>
<div class="r" style="left:1057px;top:897px;width:1px;height:28px;background:#e1e1e1;"></div>
<div class="r" style="left:1227px;top:897px;width:1px;height:28px;background:#e1e1e1;"></div>
<div class="r" style="left:1376px;top:897px;width:1px;height:28px;background:#e1e1e1;"></div>
<div class="r" style="left:1581px;top:897px;width:1px;height:28px;background:#e1e1e1;"></div>
<div class="r" style="left:1696px;top:897px;width:1px;height:28px;background:#e1e1e1;"></div>
<div class="r" style="left:0px;top:954px;width:36px;height:1px;background:linear-gradient(90deg,rgba(212,212,212,0.15),#d4d4d4 70%);"></div>
<div class="t" style="top:931.07px;font-size:20px;color:#444444;left:6.78px;">26</div>
<div class="r" style="left:37px;top:926px;width:1677px;height:28px;background:#e2efda;"></div>
<div class="r" style="left:37px;top:954px;width:1677px;height:1px;background:#a9d08e;"></div>
<div class="r" style="left:0px;top:983px;width:36px;height:1px;background:linear-gradient(90deg,rgba(212,212,212,0.15),#d4d4d4 70%);"></div>
<div class="t" style="top:960.07px;font-size:20px;color:#444444;left:6.78px;">27</div>
<div class="r" style="left:37px;top:955px;width:1677px;height:28px;background:#ffffff;"></div>
<div class="r" style="left:37px;top:983px;width:1677px;height:1px;background:#a9d08e;"></div>
<div class="r" style="left:152px;top:955px;width:1px;height:28px;background:#e1e1e1;"></div>
<div class="r" style="left:291px;top:955px;width:1px;height:28px;background:#e1e1e1;"></div>
<div class="r" style="left:473px;top:955px;width:1px;height:28px;background:#e1e1e1;"></div>
<div class="r" style="left:860px;top:955px;width:1px;height:28px;background:#e1e1e1;"></div>
<div class="r" style="left:956px;top:955px;width:1px;height:28px;background:#e1e1e1;"></div>
<div class="r" style="left:1057px;top:955px;width:1px;height:28px;background:#e1e1e1;"></div>
<div class="r" style="left:1227px;top:955px;width:1px;height:28px;background:#e1e1e1;"></div>
<div class="r" style="left:1376px;top:955px;width:1px;height:28px;background:#e1e1e1;"></div>
<div class="r" style="left:1581px;top:955px;width:1px;height:28px;background:#e1e1e1;"></div>
<div class="r" style="left:1696px;top:955px;width:1px;height:28px;background:#e1e1e1;"></div>
<div class="r" style="left:0px;top:1012px;width:36px;height:1px;background:linear-gradient(90deg,rgba(212,212,212,0.15),#d4d4d4 70%);"></div>
<div class="t" style="top:989.07px;font-size:20px;color:#444444;left:6.78px;">28</div>
<div class="r" style="left:37px;top:984px;width:1677px;height:28px;background:#e2efda;"></div>
<div class="r" style="left:37px;top:1012px;width:1677px;height:1px;background:#a9d08e;"></div>
<div class="r" style="left:0px;top:1041px;width:36px;height:1px;background:linear-gradient(90deg,rgba(212,212,212,0.15),#d4d4d4 70%);"></div>
<div class="t" style="top:1018.07px;font-size:20px;color:#444444;left:6.78px;">29</div>
<div class="r" style="left:37px;top:1013px;width:1677px;height:28px;background:#ffffff;"></div>
<div class="r" style="left:37px;top:1041px;width:1677px;height:1px;background:#a9d08e;"></div>
<div class="r" style="left:152px;top:1013px;width:1px;height:28px;background:#e1e1e1;"></div>
<div class="r" style="left:291px;top:1013px;width:1px;height:28px;background:#e1e1e1;"></div>
<div class="r" style="left:473px;top:1013px;width:1px;height:28px;background:#e1e1e1;"></div>
<div class="r" style="left:860px;top:1013px;width:1px;height:28px;background:#e1e1e1;"></div>
<div class="r" style="left:956px;top:1013px;width:1px;height:28px;background:#e1e1e1;"></div>
<div class="r" style="left:1057px;top:1013px;width:1px;height:28px;background:#e1e1e1;"></div>
<div class="r" style="left:1227px;top:1013px;width:1px;height:28px;background:#e1e1e1;"></div>
<div class="r" style="left:1376px;top:1013px;width:1px;height:28px;background:#e1e1e1;"></div>
<div class="r" style="left:1581px;top:1013px;width:1px;height:28px;background:#e1e1e1;"></div>
<div class="r" style="left:1696px;top:1013px;width:1px;height:28px;background:#e1e1e1;"></div>
<div class="t" style="top:206.07px;font-size:20px;color:#fff;font-weight:bold;left:40.40px;transform:scaleX(0.9409);transform-origin:0 0;">Column1</div>
<div class="r" style="left:128px;top:203px;width:22px;height:22px;border:1px solid #c8c8c8;background:linear-gradient(#fdfdfd,#eeeef2);"></div>
<svg style="left:0;top:0" width="1" height="1"><path d="M135.4 213 L144.6 213 L140.0 218.2 Z" fill="#5f5f5f"/></svg>
<div class="t" style="top:206.07px;font-size:20px;color:#fff;font-weight:bold;left:156.40px;transform:scaleX(0.9636);transform-origin:0 0;">studyName</div>
<div class="r" style="left:267px;top:203px;width:22px;height:22px;border:1px solid #c8c8c8;background:linear-gradient(#fdfdfd,#eeeef2);"></div>
<svg style="left:0;top:0" width="1" height="1"><path d="M274.4 213 L283.6 213 L279.0 218.2 Z" fill="#5f5f5f"/></svg>
<div class="t" style="top:206.07px;font-size:20px;color:#fff;font-weight:bold;left:295.40px;transform:scaleX(0.9569);transform-origin:0 0;">Sample Number</div>
<div class="r" style="left:449px;top:203px;width:22px;height:22px;border:1px solid #c8c8c8;background:linear-gradient(#fdfdfd,#eeeef2);"></div>
<svg style="left:0;top:0" width="1" height="1"><path d="M456.4 213 L465.6 213 L461.0 218.2 Z" fill="#5f5f5f"/></svg>
<div class="t" style="top:206.07px;font-size:20px;color:#fff;font-weight:bold;left:477.40px;transform:scaleX(0.8770);transform-origin:0 0;">Species</div>
<div class="r" style="left:836px;top:203px;width:22px;height:22px;border:1px solid #c8c8c8;background:linear-gradient(#fdfdfd,#eeeef2);"></div>
<svg style="left:0;top:0" width="1" height="1"><path d="M843.4 213 L852.6 213 L848.0 218.2 Z" fill="#5f5f5f"/></svg>
<div class="t" style="top:206.07px;font-size:20px;color:#fff;font-weight:bold;left:864.40px;transform:scaleX(0.8970);transform-origin:0 0;">Region</div>
<div class="r" style="left:932px;top:203px;width:22px;height:22px;border:1px solid #c8c8c8;background:linear-gradient(#fdfdfd,#eeeef2);"></div>
<svg style="left:0;top:0" width="1" height="1"><path d="M939.4 213 L948.6 213 L944.0 218.2 Z" fill="#5f5f5f"/></svg>
<div class="t" style="top:206.07px;font-size:20px;color:#fff;font-weight:bold;left:960.40px;transform:scaleX(0.9204);transform-origin:0 0;">Island</div>
<div class="r" style="left:1033px;top:203px;width:22px;height:22px;border:1px solid #c8c8c8;background:linear-gradient(#fdfdfd,#eeeef2);"></div>
<svg style="left:0;top:0" width="1" height="1"><path d="M1040.4 213 L1049.6 213 L1045.0 218.2 Z" fill="#5f5f5f"/></svg>
<div class="t" style="top:206.07px;font-size:20px;color:#fff;font-weight:bold;left:1061.40px;transform:scaleX(0.9409);transform-origin:0 0;">Stage</div>
<div class="r" style="left:1203px;top:203px;width:22px;height:22px;border:1px solid #c8c8c8;background:linear-gradient(#fdfdfd,#eeeef2);"></div>
<svg style="left:0;top:0" width="1" height="1"><path d="M1210.4 213 L1219.6 213 L1215.0 218.2 Z" fill="#5f5f5f"/></svg>
<div class="t" style="top:206.07px;font-size:20px;color:#fff;font-weight:bold;left:1231.40px;transform:scaleX(0.9529);transform-origin:0 0;">Individual ID</div>
<div class="r" style="left:1352px;top:203px;width:22px;height:22px;border:1px solid #c8c8c8;background:linear-gradient(#fdfdfd,#eeeef2);"></div>
<svg style="left:0;top:0" width="1" height="1"><path d="M1359.4 213 L1368.6 213 L1364.0 218.2 Z" fill="#5f5f5f"/></svg>
<div class="t" style="top:206.07px;font-size:20px;color:#fff;font-weight:bold;left:1380.40px;transform:scaleX(0.9496);transform-origin:0 0;">Clutch Completion</div>
<div class="r" style="left:1557px;top:203px;width:22px;height:22px;border:1px solid #c8c8c8;background:linear-gradient(#fdfdfd,#eeeef2);"></div>
<svg style="left:0;top:0" width="1" height="1"><path d="M1564.4 213 L1573.6 213 L1569.0 218.2 Z" fill="#5f5f5f"/></svg>
<div class="t" style="top:206.07px;font-size:20px;color:#fff;font-weight:bold;left:1585.40px;transform:scaleX(0.9160);transform-origin:0 0;">Date Egg</div>
<div class="r" style="left:1672px;top:203px;width:22px;height:22px;border:1px solid #c8c8c8;background:linear-gradient(#fdfdfd,#eeeef2);"></div>
<svg style="left:0;top:0" width="1" height="1"><path d="M1679.4 213 L1688.6 213 L1684.0 218.2 Z" fill="#5f5f5f"/></svg>
<div class="t" style="top:206.07px;font-size:20px;color:#fff;font-weight:bold;left:1700.40px;transform:scaleX(0.9409);transform-origin:0 0;">Culmen Length (mm)</div>
<div class="t" style="top:234.87px;font-size:20px;color:#000;left:138.28px;">1</div>
<div class="t" style="top:234.87px;font-size:20px;color:#000;left:157.20px;transform:scaleX(0.9317);transform-origin:0 0;">PAL0708</div>
<div class="t" style="top:234.87px;font-size:20px;color:#000;left:459.78px;">1</div>
<div class="t" style="top:234.87px;font-size:20px;color:#000;left:477.90px;transform:scaleX(0.9856);transform-origin:0 0;">Adelie Penguin (Pygoscelis adeliae)</div>
<div class="t" style="top:234.87px;font-size:20px;color:#000;left:864.40px;transform:scaleX(0.9913);transform-origin:0 0;">Anvers</div>
<div class="t" style="top:234.87px;font-size:20px;color:#000;left:960.80px;transform:scaleX(1.0108);transform-origin:0 0;">Torgersen</div>
<div class="t" style="top:234.87px;font-size:20px;color:#000;left:1061.40px;transform:scaleX(0.9504);transform-origin:0 0;">Adult, 1 Egg Stage</div>
<div class="t" style="top:234.87px;font-size:20px;color:#000;left:1231.60px;transform:scaleX(0.9565);transform-origin:0 0;">N1A1</div>
<div class="t" style="top:234.87px;font-size:20px;color:#000;left:1380.30px;transform:scaleX(0.9135);transform-origin:0 0;">Yes</div>
<div class="t" style="top:234.87px;font-size:20px;color:#000;left:1588.30px;transform:scaleX(1.0667);transform-origin:0 0;">11/11/2007</div>
<div class="t" style="top:234.87px;font-size:20px;color:#000;left:1699.50px;">39.1</div>
<div class="t" style="top:263.87px;font-size:20px;color:#000;left:138.28px;">2</div>
<div class="t" style="top:263.87px;font-size:20px;color:#000;left:157.20px;transform:scaleX(0.9317);transform-origin:0 0;">PAL0708</div>
<div class="t" style="top:263.87px;font-size:20px;color:#000;left:459.78px;">2</div>
<div class="t" style="top:263.87px;font-size:20px;color:#000;left:477.90px;transform:scaleX(0.9856);transform-origin:0 0;">Adelie Penguin (Pygoscelis adeliae)</div>
<div class="t" style="top:263.87px;font-size:20px;color:#000;left:864.40px;transform:scaleX(0.9913);transform-origin:0 0;">Anvers</div>
<div class="t" style="top:263.87px;font-size:20px;color:#000;left:960.80px;transform:scaleX(1.0108);transform-origin:0 0;">Torgersen</div>
<div class="t" style="top:263.87px;font-size:20px;color:#000;left:1061.40px;transform:scaleX(0.9504);transform-origin:0 0;">Adult, 1 Egg Stage</div>
<div class="t" style="top:263.87px;font-size:20px;color:#000;left:1231.60px;transform:scaleX(0.9565);transform-origin:0 0;">N1A2</div>
<div class="t" style="top:263.87px;font-size:20px;color:#000;left:1380.30px;transform:scaleX(0.9135);transform-origin:0 0;">Yes</div>
<div class="t" style="top:263.87px;font-size:20px;color:#000;left:1588.30px;transform:scaleX(1.0667);transform-origin:0 0;">11/11/2007</div>
<div class="t" style="top:263.87px;font-size:20px;color:#000;left:1699.50px;">39.5</div>
<div class="t" style="top:292.87px;font-size:20px;color:#000;left:138.28px;">3</div>
<div class="t" style="top:292.87px;font-size:20px;color:#000;left:157.20px;transform:scaleX(0.9317);transform-origin:0 0;">PAL0708</div>
<div class="t" style="top:292.87px;font-size:20px;color:#000;left:459.78px;">3</div>
<div class="t" style="top:292.87px;font-size:20px;color:#000;left:477.90px;transform:scaleX(0.9856);transform-origin:0 0;">Adelie Penguin (Pygoscelis adeliae)</div>
<div class="t" style="top:292.87px;font-size:20px;color:#000;left:864.40px;transform:scaleX(0.9913);transform-origin:0 0;">Anvers</div>
<div class="t" style="top:292.87px;font-size:20px;color:#000;left:960.80px;transform:scaleX(1.0108);transform-origin:0 0;">Torgersen</div>
<div class="t" style="top:292.87px;font-size:20px;color:#000;left:1061.40px;transform:scaleX(0.9504);transform-origin:0 0;">Adult, 1 Egg Stage</div>
<div class="t" style="top:292.87px;font-size:20px;color:#000;left:1231.60px;transform:scaleX(0.9565);transform-origin:0 0;">N2A1</div>
<div class="t" style="top:292.87px;font-size:20px;color:#000;left:1380.30px;transform:scaleX(0.9135);transform-origin:0 0;">Yes</div>
<div class="t" style="top:292.87px;font-size:20px;color:#000;left:1586.70px;transform:scaleX(1.0667);transform-origin:0 0;">11/16/2007</div>
<div class="t" style="top:292.87px;font-size:20px;color:#000;left:1699.50px;">40.3</div>
<div class="t" style="top:321.87px;font-size:20px;color:#000;left:138.28px;">4</div>
<div class="t" style="top:321.87px;font-size:20px;color:#000;left:157.20px;transform:scaleX(0.9317);transform-origin:0 0;">PAL0708</div>
<div class="t" style="top:321.87px;font-size:20px;color:#000;left:459.78px;">4</div>
<div class="t" style="top:321.87px;font-size:20px;color:#000;left:477.90px;transform:scaleX(0.9856);transform-origin:0 0;">Adelie Penguin (Pygoscelis adeliae)</div>
<div class="t" style="top:321.87px;font-size:20px;color:#000;left:864.40px;transform:scaleX(0.9913);transform-origin:0 0;">Anvers</div>
<div class="t" style="top:321.87px;font-size:20px;color:#000;left:960.80px;transform:scaleX(1.0108);transform-origin:0 0;">Torgersen</div>
<div class="t" style="top:321.87px;font-size:20px;color:#000;left:1061.40px;transform:scaleX(0.9504);transform-origin:0 0;">Adult, 1 Egg Stage</div>
<div class="t" style="top:321.87px;font-size:20px;color:#000;left:1231.60px;transform:scaleX(0.9565);transform-origin:0 0;">N2A2</div>
<div class="t" style="top:321.87px;font-size:20px;color:#000;left:1380.30px;transform:scaleX(0.9135);transform-origin:0 0;">Yes</div>
<div class="t" style="top:321.87px;font-size:20px;color:#000;left:1586.70px;transform:scaleX(1.0667);transform-origin:0 0;">11/16/2007</div>
<div class="t" style="top:321.87px;font-size:20px;color:#000;left:1699.50px;">NA</div>
<div class="t" style="top:350.87px;font-size:20px;color:#000;left:138.28px;">5</div>
<div class="t" style="top:350.87px;font-size:20px;color:#000;left:157.20px;transform:scaleX(0.9317);transform-origin:0 0;">PAL0708</div>
<div class="t" style="top:350.87px;font-size:20px;color:#000;left:459.78px;">5</div>
<div class="t" style="top:350.87px;font-size:20px;color:#000;left:477.90px;transform:scaleX(0.9856);transform-origin:0 0;">Adelie Penguin (Pygoscelis adeliae)</div>
<div class="t" style="top:350.87px;font-size:20px;color:#000;left:864.40px;transform:scaleX(0.9913);transform-origin:0 0;">Anvers</div>
<div class="t" style="top:350.87px;font-size:20px;color:#000;left:960.80px;transform:scaleX(1.0108);transform-origin:0 0;">Torgersen</div>
<div class="t" style="top:350.87px;font-size:20px;color:#000;left:1061.40px;transform:scaleX(0.9504);transform-origin:0 0;">Adult, 1 Egg Stage</div>
<div class="t" style="top:350.87px;font-size:20px;color:#000;left:1231.60px;transform:scaleX(0.9565);transform-origin:0 0;">N3A1</div>
<div class="t" style="top:350.87px;font-size:20px;color:#000;left:1380.30px;transform:scaleX(0.9135);transform-origin:0 0;">Yes</div>
<div class="t" style="top:350.87px;font-size:20px;color:#000;left:1586.70px;transform:scaleX(1.0667);transform-origin:0 0;">11/16/2007</div>
<div class="t" style="top:350.87px;font-size:20px;color:#000;left:1699.50px;">36.7</div>
<div class="t" style="top:379.87px;font-size:20px;color:#000;left:138.28px;">6</div>
<div class="t" style="top:379.87px;font-size:20px;color:#000;left:157.20px;transform:scaleX(0.9317);transform-origin:0 0;">PAL0708</div>
<div class="t" style="top:379.87px;font-size:20px;color:#000;left:459.78px;">6</div>
<div class="t" style="top:379.87px;font-size:20px;color:#000;left:477.90px;transform:scaleX(0.9856);transform-origin:0 0;">Adelie Penguin (Pygoscelis adeliae)</div>
<div class="t" style="top:379.87px;font-size:20px;color:#000;left:864.40px;transform:scaleX(0.9913);transform-origin:0 0;">Anvers</div>
<div class="t" style="top:379.87px;font-size:20px;color:#000;left:960.80px;transform:scaleX(1.0108);transform-origin:0 0;">Torgersen</div>
<div class="t" style="top:379.87px;font-size:20px;color:#000;left:1061.40px;transform:scaleX(0.9504);transform-origin:0 0;">Adult, 1 Egg Stage</div>
<div class="t" style="top:379.87px;font-size:20px;color:#000;left:1231.60px;transform:scaleX(0.9565);transform-origin:0 0;">N3A2</div>
<div class="t" style="top:379.87px;font-size:20px;color:#000;left:1380.30px;transform:scaleX(0.9135);transform-origin:0 0;">Yes</div>
<div class="t" style="top:379.87px;font-size:20px;color:#000;left:1586.70px;transform:scaleX(1.0667);transform-origin:0 0;">11/16/2007</div>
<div class="t" style="top:379.87px;font-size:20px;color:#000;left:1699.50px;">39.3</div>
<div class="t" style="top:408.87px;font-size:20px;color:#000;left:138.28px;">7</div>
<div class="t" style="top:408.87px;font-size:20px;color:#000;left:157.20px;transform:scaleX(0.9317);transform-origin:0 0;">PAL0708</div>
<div class="t" style="top:408.87px;font-size:20px;color:#000;left:459.78px;">7</div>
<div class="t" style="top:408.87px;font-size:20px;color:#000;left:477.90px;transform:scaleX(0.9856);transform-origin:0 0;">Adelie Penguin (Pygoscelis adeliae)</div>
<div class="t" style="top:408.87px;font-size:20px;color:#000;left:864.40px;transform:scaleX(0.9913);transform-origin:0 0;">Anvers</div>
<div class="t" style="top:408.87px;font-size:20px;color:#000;left:960.80px;transform:scaleX(1.0108);transform-origin:0 0;">Torgersen</div>
<div class="t" style="top:408.87px;font-size:20px;color:#000;left:1061.40px;transform:scaleX(0.9504);transform-origin:0 0;">Adult, 1 Egg Stage</div>
<div class="t" style="top:408.87px;font-size:20px;color:#000;left:1231.60px;transform:scaleX(0.9565);transform-origin:0 0;">N4A1</div>
<div class="t" style="top:408.87px;font-size:20px;color:#000;left:1380.30px;transform:scaleX(0.9135);transform-origin:0 0;">No</div>
<div class="t" style="top:408.87px;font-size:20px;color:#000;left:1586.70px;transform:scaleX(1.0667);transform-origin:0 0;">11/15/2007</div>
<div class="t" style="top:408.87px;font-size:20px;color:#000;left:1699.50px;">38.9</div>
<div class="t" style="top:437.87px;font-size:20px;color:#000;left:138.28px;">8</div>
<div class="t" style="top:437.87px;font-size:20px;color:#000;left:157.20px;transform:scaleX(0.9317);transform-origin:0 0;">PAL0708</div>
<div class="t" style="top:437.87px;font-size:20px;color:#000;left:459.78px;">8</div>
<div class="t" style="top:437.87px;font-size:20px;color:#000;left:477.90px;transform:scaleX(0.9856);transform-origin:0 0;">Adelie Penguin (Pygoscelis adeliae)</div>
<div class="t" style="top:437.87px;font-size:20px;color:#000;left:864.40px;transform:scaleX(0.9913);transform-origin:0 0;">Anvers</div>
<div class="t" style="top:437.87px;font-size:20px;color:#000;left:960.80px;transform:scaleX(1.0108);transform-origin:0 0;">Torgersen</div>
<div class="t" style="top:437.87px;font-size:20px;color:#000;left:1061.40px;transform:scaleX(0.9504);transform-origin:0 0;">Adult, 1 Egg Stage</div>
<div class="t" style="top:437.87px;font-size:20px;color:#000;left:1231.60px;transform:scaleX(0.9565);transform-origin:0 0;">N4A2</div>
<div class="t" style="top:437.87px;font-size:20px;color:#000;left:1380.30px;transform:scaleX(0.9135);transform-origin:0 0;">No</div>
<div class="t" style="top:437.87px;font-size:20px;color:#000;left:1586.70px;transform:scaleX(1.0667);transform-origin:0 0;">11/15/2007</div>
<div class="t" style="top:437.87px;font-size:20px;color:#000;left:1699.50px;">39.2</div>
<div class="t" style="top:466.87px;font-size:20px;color:#000;left:138.28px;">9</div>
<div class="t" style="top:466.87px;font-size:20px;color:#000;left:157.20px;transform:scaleX(0.9317);transform-origin:0 0;">PAL0708</div>
<div class="t" style="top:466.87px;font-size:20px;color:#000;left:459.78px;">9</div>
<div class="t" style="top:466.87px;font-size:20px;color:#000;left:477.90px;transform:scaleX(0.9856);transform-origin:0 0;">Adelie Penguin (Pygoscelis adeliae)</div>
<div class="t" style="top:466.87px;font-size:20px;color:#000;left:864.40px;transform:scaleX(0.9913);transform-origin:0 0;">Anvers</div>
<div class="t" style="top:466.87px;font-size:20px;color:#000;left:960.80px;transform:scaleX(1.0108);transform-origin:0 0;">Torgersen</div>
<div class="t" style="top:466.87px;font-size:20px;color:#000;left:1061.40px;transform:scaleX(0.9504);transform-origin:0 0;">Adult, 1 Egg Stage</div>
<div class="t" style="top:466.87px;font-size:20px;color:#000;left:1231.60px;transform:scaleX(0.9565);transform-origin:0 0;">N5A1</div>
<div class="t" style="top:466.87px;font-size:20px;color:#000;left:1380.30px;transform:scaleX(0.9135);transform-origin:0 0;">Yes</div>
<div class="t" style="top:466.87px;font-size:20px;color:#000;left:1598.56px;transform:scaleX(1.0667);transform-origin:0 0;">11/9/2007</div>
<div class="t" style="top:466.87px;font-size:20px;color:#000;left:1699.50px;">34.1</div>
<div class="t" style="top:495.87px;font-size:20px;color:#000;left:127.15px;">10</div>
<div class="t" style="top:495.87px;font-size:20px;color:#000;left:157.20px;transform:scaleX(0.9317);transform-origin:0 0;">PAL0708</div>
<div class="t" style="top:495.87px;font-size:20px;color:#000;left:448.65px;">10</div>
<div class="t" style="top:495.87px;font-size:20px;color:#000;left:477.90px;transform:scaleX(0.9856);transform-origin:0 0;">Adelie Penguin (Pygoscelis adeliae)</div>
<div class="t" style="top:495.87px;font-size:20px;color:#000;left:864.40px;transform:scaleX(0.9913);transform-origin:0 0;">Anvers</div>
<div class="t" style="top:495.87px;font-size:20px;color:#000;left:960.80px;transform:scaleX(1.0108);transform-origin:0 0;">Torgersen</div>
<div class="t" style="top:495.87px;font-size:20px;color:#000;left:1061.40px;transform:scaleX(0.9504);transform-origin:0 0;">Adult, 1 Egg Stage</div>
<div class="t" style="top:495.87px;font-size:20px;color:#000;left:1231.60px;transform:scaleX(0.9565);transform-origin:0 0;">N5A2</div>
<div class="t" style="top:495.87px;font-size:20px;color:#000;left:1380.30px;transform:scaleX(0.9135);transform-origin:0 0;">Yes</div>
<div class="t" style="top:495.87px;font-size:20px;color:#000;left:1598.56px;transform:scaleX(1.0667);transform-origin:0 0;">11/9/2007</div>
<div class="t" style="top:495.87px;font-size:20px;color:#000;left:1699.50px;">42</div>
<div class="t" style="top:524.87px;font-size:20px;color:#000;left:128.64px;">11</div>
<div class="t" style="top:524.87px;font-size:20px;color:#000;left:157.20px;transform:scaleX(0.9317);transform-origin:0 0;">PAL0708</div>
<div class="t" style="top:524.87px;font-size:20px;color:#000;left:450.14px;">11</div>
<div class="t" style="top:524.87px;font-size:20px;color:#000;left:477.90px;transform:scaleX(0.9856);transform-origin:0 0;">Adelie Penguin (Pygoscelis adeliae)</div>
<div class="t" style="top:524.87px;font-size:20px;color:#000;left:864.40px;transform:scaleX(0.9913);transform-origin:0 0;">Anvers</div>
<div class="t" style="top:524.87px;font-size:20px;color:#000;left:960.80px;transform:scaleX(1.0108);transform-origin:0 0;">Torgersen</div>
<div class="t" style="top:524.87px;font-size:20px;color:#000;left:1061.40px;transform:scaleX(0.9504);transform-origin:0 0;">Adult, 1 Egg Stage</div>
<div class="t" style="top:524.87px;font-size:20px;color:#000;left:1231.60px;transform:scaleX(0.9565);transform-origin:0 0;">N6A1</div>
<div class="t" style="top:524.87px;font-size:20px;color:#000;left:1380.30px;transform:scaleX(0.9135);transform-origin:0 0;">Yes</div>
<div class="t" style="top:524.87px;font-size:20px;color:#000;left:1598.56px;transform:scaleX(1.0667);transform-origin:0 0;">11/9/2007</div>
<div class="t" style="top:524.87px;font-size:20px;color:#000;left:1699.50px;">37.8</div>
<div class="t" style="top:553.87px;font-size:20px;color:#000;left:127.15px;">12</div>
<div class="t" style="top:553.87px;font-size:20px;color:#000;left:157.20px;transform:scaleX(0.9317);transform-origin:0 0;">PAL0708</div>
<div class="t" style="top:553.87px;font-size:20px;color:#000;left:448.65px;">12</div>
<div class="t" style="top:553.87px;font-size:20px;color:#000;left:477.90px;transform:scaleX(0.9856);transform-origin:0 0;">Adelie Penguin (Pygoscelis adeliae)</div>
<div class="t" style="top:553.87px;font-size:20px;color:#000;left:864.40px;transform:scaleX(0.9913);transform-origin:0 0;">Anvers</div>
<div class="t" style="top:553.87px;font-size:20px;color:#000;left:960.80px;transform:scaleX(1.0108);transform-origin:0 0;">Torgersen</div>
<div class="t" style="top:553.87px;font-size:20px;color:#000;left:1061.40px;transform:scaleX(0.9504);transform-origin:0 0;">Adult, 1 Egg Stage</div>
<div class="t" style="top:553.87px;font-size:20px;color:#000;left:1231.60px;transform:scaleX(0.9565);transform-origin:0 0;">N6A2</div>
<div class="t" style="top:553.87px;font-size:20px;color:#000;left:1380.30px;transform:scaleX(0.9135);transform-origin:0 0;">Yes</div>
<div class="t" style="top:553.87px;font-size:20px;color:#000;left:1598.56px;transform:scaleX(1.0667);transform-origin:0 0;">11/9/2007</div>
<div class="t" style="top:553.87px;font-size:20px;color:#000;left:1699.50px;">37.8</div>
<div class="t" style="top:582.87px;font-size:20px;color:#000;left:127.15px;">13</div>
<div class="t" style="top:582.87px;font-size:20px;color:#000;left:157.20px;transform:scaleX(0.9317);transform-origin:0 0;">PAL0708</div>
<div class="t" style="top:582.87px;font-size:20px;color:#000;left:448.65px;">13</div>
<div class="t" style="top:582.87px;font-size:20px;color:#000;left:477.90px;transform:scaleX(0.9856);transform-origin:0 0;">Adelie Penguin (Pygoscelis adeliae)</div>
<div class="t" style="top:582.87px;font-size:20px;color:#000;left:864.40px;transform:scaleX(0.9913);transform-origin:0 0;">Anvers</div>
<div class="t" style="top:582.87px;font-size:20px;color:#000;left:960.80px;transform:scaleX(1.0108);transform-origin:0 0;">Torgersen</div>
<div class="t" style="top:582.87px;font-size:20px;color:#000;left:1061.40px;transform:scaleX(0.9504);transform-origin:0 0;">Adult, 1 Egg Stage</div>
<div class="t" style="top:582.87px;font-size:20px;color:#000;left:1231.60px;transform:scaleX(0.9565);transform-origin:0 0;">N7A1</div>
<div class="t" style="top:582.87px;font-size:20px;color:#000;left:1380.30px;transform:scaleX(0.9135);transform-origin:0 0;">Yes</div>
<div class="t" style="top:582.87px;font-size:20px;color:#000;left:1586.70px;transform:scaleX(1.0667);transform-origin:0 0;">11/15/2007</div>
<div class="t" style="top:582.87px;font-size:20px;color:#000;left:1699.50px;">41.1</div>
<div class="t" style="top:611.87px;font-size:20px;color:#000;left:127.15px;">14</div>
<div class="t" style="top:611.87px;font-size:20px;color:#000;left:157.20px;transform:scaleX(0.9317);transform-origin:0 0;">PAL0708</div>
<div class="t" style="top:611.87px;font-size:20px;color:#000;left:448.65px;">14</div>
<div class="t" style="top:611.87px;font-size:20px;color:#000;left:477.90px;transform:scaleX(0.9856);transform-origin:0 0;">Adelie Penguin (Pygoscelis adeliae)</div>
<div class="t" style="top:611.87px;font-size:20px;color:#000;left:864.40px;transform:scaleX(0.9913);transform-origin:0 0;">Anvers</div>
<div class="t" style="top:611.87px;font-size:20px;color:#000;left:960.80px;transform:scaleX(1.0108);transform-origin:0 0;">Torgersen</div>
<div class="t" style="top:611.87px;font-size:20px;color:#000;left:1061.40px;transform:scaleX(0.9504);transform-origin:0 0;">Adult, 1 Egg Stage</div>
<div class="t" style="top:611.87px;font-size:20px;color:#000;left:1231.60px;transform:scaleX(0.9565);transform-origin:0 0;">N7A2</div>
<div class="t" style="top:611.87px;font-size:20px;color:#000;left:1380.30px;transform:scaleX(0.9135);transform-origin:0 0;">Yes</div>
<div class="t" style="top:611.87px;font-size:20px;color:#000;left:1586.70px;transform:scaleX(1.0667);transform-origin:0 0;">11/15/2007</div>
<div class="t" style="top:611.87px;font-size:20px;color:#000;left:1699.50px;">38.6</div>
<div class="t" style="top:640.87px;font-size:20px;color:#000;left:127.15px;">15</div>
<div class="t" style="top:640.87px;font-size:20px;color:#000;left:157.20px;transform:scaleX(0.9317);transform-origin:0 0;">PAL0708</div>
<div class="t" style="top:640.87px;font-size:20px;color:#000;left:448.65px;">15</div>
<div class="t" style="top:640.87px;font-size:20px;color:#000;left:477.90px;transform:scaleX(0.9856);transform-origin:0 0;">Adelie Penguin (Pygoscelis adeliae)</div>
<div class="t" style="top:640.87px;font-size:20px;color:#000;left:864.40px;transform:scaleX(0.9913);transform-origin:0 0;">Anvers</div>
<div class="t" style="top:640.87px;font-size:20px;color:#000;left:960.80px;transform:scaleX(1.0108);transform-origin:0 0;">Torgersen</div>
<div class="t" style="top:640.87px;font-size:20px;color:#000;left:1061.40px;transform:scaleX(0.9504);transform-origin:0 0;">Adult, 1 Egg Stage</div>
<div class="t" style="top:640.87px;font-size:20px;color:#000;left:1231.60px;transform:scaleX(0.9565);transform-origin:0 0;">N8A1</div>
<div class="t" style="top:640.87px;font-size:20px;color:#000;left:1380.30px;transform:scaleX(0.9135);transform-origin:0 0;">Yes</div>
<div class="t" style="top:640.87px;font-size:20px;color:#000;left:1586.70px;transform:scaleX(1.0667);transform-origin:0 0;">11/16/2007</div>
<div class="t" style="top:640.87px;font-size:20px;color:#000;left:1699.50px;">34.6</div>
<div class="t" style="top:669.87px;font-size:20px;color:#000;left:127.15px;">16</div>
<div class="t" style="top:669.87px;font-size:20px;color:#000;left:157.20px;transform:scaleX(0.9317);transform-origin:0 0;">PAL0708</div>
<div class="t" style="top:669.87px;font-size:20px;color:#000;left:448.65px;">16</div>
<div class="t" style="top:669.87px;font-size:20px;color:#000;left:477.90px;transform:scaleX(0.9856);transform-origin:0 0;">Adelie Penguin (Pygoscelis adeliae)</div>
<div class="t" style="top:669.87px;font-size:20px;color:#000;left:864.40px;transform:scaleX(0.9913);transform-origin:0 0;">Anvers</div>
<div class="t" style="top:669.87px;font-size:20px;color:#000;left:960.80px;transform:scaleX(1.0108);transform-origin:0 0;">Torgersen</div>
<div class="t" style="top:669.87px;font-size:20px;color:#000;left:1061.40px;transform:scaleX(0.9504);transform-origin:0 0;">Adult, 1 Egg Stage</div>
<div class="t" style="top:669.87px;font-size:20px;color:#000;left:1231.60px;transform:scaleX(0.9565);transform-origin:0 0;">N8A2</div>
<div class="t" style="top:669.87px;font-size:20px;color:#000;left:1380.30px;transform:scaleX(0.9135);transform-origin:0 0;">Yes</div>
<div class="t" style="top:669.87px;font-size:20px;color:#000;left:1586.70px;transform:scaleX(1.0667);transform-origin:0 0;">11/16/2007</div>
<div class="t" style="top:669.87px;font-size:20px;color:#000;left:1699.50px;">36.6</div>
<div class="t" style="top:698.87px;font-size:20px;color:#000;left:127.15px;">17</div>
<div class="t" style="top:698.87px;font-size:20px;color:#000;left:157.20px;transform:scaleX(0.9317);transform-origin:0 0;">PAL0708</div>
<div class="t" style="top:698.87px;font-size:20px;color:#000;left:448.65px;">17</div>
<div class="t" style="top:698.87px;font-size:20px;color:#000;left:477.90px;transform:scaleX(0.9856);transform-origin:0 0;">Adelie Penguin (Pygoscelis adeliae)</div>
<div class="t" style="top:698.87px;font-size:20px;color:#000;left:864.40px;transform:scaleX(0.9913);transform-origin:0 0;">Anvers</div>
<div class="t" style="top:698.87px;font-size:20px;color:#000;left:960.80px;transform:scaleX(1.0108);transform-origin:0 0;">Torgersen</div>
<div class="t" style="top:698.87px;font-size:20px;color:#000;left:1061.40px;transform:scaleX(0.9504);transform-origin:0 0;">Adult, 1 Egg Stage</div>
<div class="t" style="top:698.87px;font-size:20px;color:#000;left:1231.60px;transform:scaleX(0.9565);transform-origin:0 0;">N9A1</div>
<div class="t" style="top:698.87px;font-size:20px;color:#000;left:1380.30px;transform:scaleX(0.9135);transform-origin:0 0;">Yes</div>
<div class="t" style="top:698.87px;font-size:20px;color:#000;left:1586.70px;transform:scaleX(1.0667);transform-origin:0 0;">11/12/2007</div>
<div class="t" style="top:698.87px;font-size:20px;color:#000;left:1699.50px;">38.7</div>
<div class="t" style="top:727.87px;font-size:20px;color:#000;left:127.15px;">18</div>
<div class="t" style="top:727.87px;font-size:20px;color:#000;left:157.20px;transform:scaleX(0.9317);transform-origin:0 0;">PAL0708</div>
<div class="t" style="top:727.87px;font-size:20px;color:#000;left:448.65px;">18</div>
<div class="t" style="top:727.87px;font-size:20px;color:#000;left:477.90px;transform:scaleX(0.9856);transform-origin:0 0;">Adelie Penguin (Pygoscelis adeliae)</div>
<div class="t" style="top:727.87px;font-size:20px;color:#000;left:864.40px;transform:scaleX(0.9913);transform-origin:0 0;">Anvers</div>
<div class="t" style="top:727.87px;font-size:20px;color:#000;left:960.80px;transform:scaleX(1.0108);transform-origin:0 0;">Torgersen</div>
<div class="t" style="top:727.87px;font-size:20px;color:#000;left:1061.40px;transform:scaleX(0.9504);transform-origin:0 0;">Adult, 1 Egg Stage</div>
<div class="t" style="top:727.87px;font-size:20px;color:#000;left:1231.60px;transform:scaleX(0.9565);transform-origin:0 0;">N9A2</div>
<div class="t" style="top:727.87px;font-size:20px;color:#000;left:1380.30px;transform:scaleX(0.9135);transform-origin:0 0;">Yes</div>
<div class="t" style="top:727.87px;font-size:20px;color:#000;left:1586.70px;transform:scaleX(1.0667);transform-origin:0 0;">11/12/2007</div>
<div class="t" style="top:727.87px;font-size:20px;color:#000;left:1699.50px;">42.5</div>
<div class="t" style="top:756.87px;font-size:20px;color:#000;left:127.15px;">19</div>
<div class="t" style="top:756.87px;font-size:20px;color:#000;left:157.20px;transform:scaleX(0.9317);transform-origin:0 0;">PAL0708</div>
<div class="t" style="top:756.87px;font-size:20px;color:#000;left:448.65px;">19</div>
<div class="t" style="top:756.87px;font-size:20px;color:#000;left:477.90px;transform:scaleX(0.9856);transform-origin:0 0;">Adelie Penguin (Pygoscelis adeliae)</div>
<div class="t" style="top:756.87px;font-size:20px;color:#000;left:864.40px;transform:scaleX(0.9913);transform-origin:0 0;">Anvers</div>
<div class="t" style="top:756.87px;font-size:20px;color:#000;left:960.80px;transform:scaleX(1.0108);transform-origin:0 0;">Torgersen</div>
<div class="t" style="top:756.87px;font-size:20px;color:#000;left:1061.40px;transform:scaleX(0.9504);transform-origin:0 0;">Adult, 1 Egg Stage</div>
<div class="t" style="top:756.87px;font-size:20px;color:#000;left:1231.60px;transform:scaleX(0.9565);transform-origin:0 0;">N10A1</div>
<div class="t" style="top:756.87px;font-size:20px;color:#000;left:1380.30px;transform:scaleX(0.9135);transform-origin:0 0;">Yes</div>
<div class="t" style="top:756.87px;font-size:20px;color:#000;left:1586.70px;transform:scaleX(1.0667);transform-origin:0 0;">11/16/2007</div>
<div class="t" style="top:756.87px;font-size:20px;color:#000;left:1699.50px;">34.4</div>
<div class="t" style="top:785.87px;font-size:20px;color:#000;left:127.15px;">20</div>
<div class="t" style="top:785.87px;font-size:20px;color:#000;left:157.20px;transform:scaleX(0.9317);transform-origin:0 0;">PAL0708</div>
<div class="t" style="top:785.87px;font-size:20px;color:#000;left:448.65px;">20</div>
<div class="t" style="top:785.87px;font-size:20px;color:#000;left:477.90px;transform:scaleX(0.9856);transform-origin:0 0;">Adelie Penguin (Pygoscelis adeliae)</div>
<div class="t" style="top:785.87px;font-size:20px;color:#000;left:864.40px;transform:scaleX(0.9913);transform-origin:0 0;">Anvers</div>
<div class="t" style="top:785.87px;font-size:20px;color:#000;left:960.80px;transform:scaleX(1.0108);transform-origin:0 0;">Torgersen</div>
<div class="t" style="top:785.87px;font-size:20px;color:#000;left:1061.40px;transform:scaleX(0.9504);transform-origin:0 0;">Adult, 1 Egg Stage</div>
<div class="t" style="top:785.87px;font-size:20px;color:#000;left:1231.60px;transform:scaleX(0.9565);transform-origin:0 0;">N10A2</div>
<div class="t" style="top:785.87px;font-size:20px;color:#000;left:1380.30px;transform:scaleX(0.9135);transform-origin:0 0;">Yes</div>
<div class="t" style="top:785.87px;font-size:20px;color:#000;left:1586.70px;transform:scaleX(1.0667);transform-origin:0 0;">11/16/2007</div>
<div class="t" style="top:785.87px;font-size:20px;color:#000;left:1699.50px;">46</div>
<div class="t" style="top:814.87px;font-size:20px;color:#000;left:127.15px;">21</div>
<div class="t" style="top:814.87px;font-size:20px;color:#000;left:157.20px;transform:scaleX(0.9317);transform-origin:0 0;">PAL0708</div>
<div class="t" style="top:814.87px;font-size:20px;color:#000;left:448.65px;">21</div>
<div class="t" style="top:814.87px;font-size:20px;color:#000;left:477.90px;transform:scaleX(0.9856);transform-origin:0 0;">Adelie Penguin (Pygoscelis adeliae)</div>
<div class="t" style="top:814.87px;font-size:20px;color:#000;left:864.40px;transform:scaleX(0.9913);transform-origin:0 0;">Anvers</div>
<div class="t" style="top:814.87px;font-size:20px;color:#000;left:960.80px;transform:scaleX(0.9414);transform-origin:0 0;">Biscoe</div>
<div class="t" style="top:814.87px;font-size:20px;color:#000;left:1061.40px;transform:scaleX(0.9504);transform-origin:0 0;">Adult, 1 Egg Stage</div>
<div class="t" style="top:814.87px;font-size:20px;color:#000;left:1231.60px;transform:scaleX(0.9565);transform-origin:0 0;">N11A1</div>
<div class="t" style="top:814.87px;font-size:20px;color:#000;left:1380.30px;transform:scaleX(0.9135);transform-origin:0 0;">Yes</div>
<div class="t" style="top:814.87px;font-size:20px;color:#000;left:1586.70px;transform:scaleX(1.0667);transform-origin:0 0;">11/12/2007</div>
<div class="t" style="top:814.87px;font-size:20px;color:#000;left:1699.50px;">37.8</div>
<div class="t" style="top:843.87px;font-size:20px;color:#000;left:127.15px;">22</div>
<div class="t" style="top:843.87px;font-size:20px;color:#000;left:157.20px;transform:scaleX(0.9317);transform-origin:0 0;">PAL0708</div>
<div class="t" style="top:843.87px;font-size:20px;color:#000;left:448.65px;">22</div>
<div class="t" style="top:843.87px;font-size:20px;color:#000;left:477.90px;transform:scaleX(0.9856);transform-origin:0 0;">Adelie Penguin (Pygoscelis adeliae)</div>
<div class="t" style="top:843.87px;font-size:20px;color:#000;left:864.40px;transform:scaleX(0.9913);transform-origin:0 0;">Anvers</div>
<div class="t" style="top:843.87px;font-size:20px;color:#000;left:960.80px;transform:scaleX(0.9414);transform-origin:0 0;">Biscoe</div>
<div class="t" style="top:843.87px;font-size:20px;color:#000;left:1061.40px;transform:scaleX(0.9504);transform-origin:0 0;">Adult, 1 Egg Stage</div>
<div class="t" style="top:843.87px;font-size:20px;color:#000;left:1231.60px;transform:scaleX(0.9565);transform-origin:0 0;">N11A2</div>
<div class="t" style="top:843.87px;font-size:20px;color:#000;left:1380.30px;transform:scaleX(0.9135);transform-origin:0 0;">Yes</div>
<div class="t" style="top:843.87px;font-size:20px;color:#000;left:1586.70px;transform:scaleX(1.0667);transform-origin:0 0;">11/12/2007</div>
<div class="t" style="top:843.87px;font-size:20px;color:#000;left:1699.50px;">37.7</div>
<div class="t" style="top:872.87px;font-size:20px;color:#000;left:127.15px;">23</div>
<div class="t" style="top:872.87px;font-size:20px;color:#000;left:157.20px;transform:scaleX(0.9317);transform-origin:0 0;">PAL0708</div>
<div class="t" style="top:872.87px;font-size:20px;color:#000;left:448.65px;">23</div>
<div class="t" style="top:872.87px;font-size:20px;color:#000;left:477.90px;transform:scaleX(0.9856);transform-origin:0 0;">Adelie Penguin (Pygoscelis adeliae)</div>
<div class="t" style="top:872.87px;font-size:20px;color:#000;left:864.40px;transform:scaleX(0.9913);transform-origin:0 0;">Anvers</div>
<div class="t" style="top:872.87px;font-size:20px;color:#000;left:960.80px;transform:scaleX(0.9414);transform-origin:0 0;">Biscoe</div>
<div class="t" style="top:872.87px;font-size:20px;color:#000;left:1061.40px;transform:scaleX(0.9504);transform-origin:0 0;">Adult, 1 Egg Stage</div>
<div class="t" style="top:872.87px;font-size:20px;color:#000;left:1231.60px;transform:scaleX(0.9565);transform-origin:0 0;">N12A1</div>
<div class="t" style="top:872.87px;font-size:20px;color:#000;left:1380.30px;transform:scaleX(0.9135);transform-origin:0 0;">Yes</div>
<div class="t" style="top:872.87px;font-size:20px;color:#000;left:1586.70px;transform:scaleX(1.0667);transform-origin:0 0;">11/12/2007</div>
<div class="t" style="top:872.87px;font-size:20px;color:#000;left:1699.50px;">35.9</div>
<div class="t" style="top:901.87px;font-size:20px;color:#000;left:127.15px;">24</div>
<div class="t" style="top:901.87px;font-size:20px;color:#000;left:157.20px;transform:scaleX(0.9317);transform-origin:0 0;">PAL0708</div>
<div class="t" style="top:901.87px;font-size:20px;color:#000;left:448.65px;">24</div>
<div class="t" style="top:901.87px;font-size:20px;color:#000;left:477.90px;transform:scaleX(0.9856);transform-origin:0 0;">Adelie Penguin (Pygoscelis adeliae)</div>
<div class="t" style="top:901.87px;font-size:20px;color:#000;left:864.40px;transform:scaleX(0.9913);transform-origin:0 0;">Anvers</div>
<div class="t" style="top:901.87px;font-size:20px;color:#000;left:960.80px;transform:scaleX(0.9414);transform-origin:0 0;">Biscoe</div>
<div class="t" style="top:901.87px;font-size:20px;color:#000;left:1061.40px;transform:scaleX(0.9504);transform-origin:0 0;">Adult, 1 Egg Stage</div>
<div class="t" style="top:901.87px;font-size:20px;color:#000;left:1231.60px;transform:scaleX(0.9565);transform-origin:0 0;">N12A2</div>
<div class="t" style="top:901.87px;font-size:20px;color:#000;left:1380.30px;transform:scaleX(0.9135);transform-origin:0 0;">Yes</div>
<div class="t" style="top:901.87px;font-size:20px;color:#000;left:1586.70px;transform:scaleX(1.0667);transform-origin:0 0;">11/12/2007</div>
<div class="t" style="top:901.87px;font-size:20px;color:#000;left:1699.50px;">38.2</div>
<div class="t" style="top:930.87px;font-size:20px;color:#000;left:127.15px;">25</div>
<div class="t" style="top:930.87px;font-size:20px;color:#000;left:157.20px;transform:scaleX(0.9317);transform-origin:0 0;">PAL0708</div>
<div class="t" style="top:930.87px;font-size:20px;color:#000;left:448.65px;">25</div>
<div class="t" style="top:930.87px;font-size:20px;color:#000;left:477.90px;transform:scaleX(0.9856);transform-origin:0 0;">Adelie Penguin (Pygoscelis adeliae)</div>
<div class="t" style="top:930.87px;font-size:20px;color:#000;left:864.40px;transform:scaleX(0.9913);transform-origin:0 0;">Anvers</div>
<div class="t" style="top:930.87px;font-size:20px;color:#000;left:960.80px;transform:scaleX(0.9414);transform-origin:0 0;">Biscoe</div>
<div class="t" style="top:930.87px;font-size:20px;color:#000;left:1061.40px;transform:scaleX(0.9504);transform-origin:0 0;">Adult, 1 Egg Stage</div>
<div class="t" style="top:930.87px;font-size:20px;color:#000;left:1231.60px;transform:scaleX(0.9565);transform-origin:0 0;">N13A1</div>
<div class="t" style="top:930.87px;font-size:20px;color:#000;left:1380.30px;transform:scaleX(0.9135);transform-origin:0 0;">Yes</div>
<div class="t" style="top:930.87px;font-size:20px;color:#000;left:1586.70px;transform:scaleX(1.0667);transform-origin:0 0;">11/10/2007</div>
<div class="t" style="top:930.87px;font-size:20px;color:#000;left:1699.50px;">38.8</div>
<div class="t" style="top:959.87px;font-size:20px;color:#000;left:127.15px;">26</div>
<div class="t" style="top:959.87px;font-size:20px;color:#000;left:157.20px;transform:scaleX(0.9317);transform-origin:0 0;">PAL0708</div>
<div class="t" style="top:959.87px;font-size:20px;color:#000;left:448.65px;">26</div>
<div class="t" style="top:959.87px;font-size:20px;color:#000;left:477.90px;transform:scaleX(0.9856);transform-origin:0 0;">Adelie Penguin (Pygoscelis adeliae)</div>
<div class="t" style="top:959.87px;font-size:20px;color:#000;left:864.40px;transform:scaleX(0.9913);transform-origin:0 0;">Anvers</div>
<div class="t" style="top:959.87px;font-size:20px;color:#000;left:960.80px;transform:scaleX(0.9414);transform-origin:0 0;">Biscoe</div>
<div class="t" style="top:959.87px;font-size:20px;color:#000;left:1061.40px;transform:scaleX(0.9504);transform-origin:0 0;">Adult, 1 Egg Stage</div>
<div class="t" style="top:959.87px;font-size:20px;color:#000;left:1231.60px;transform:scaleX(0.9565);transform-origin:0 0;">N13A2</div>
<div class="t" style="top:959.87px;font-size:20px;color:#000;left:1380.30px;transform:scaleX(0.9135);transform-origin:0 0;">Yes</div>
<div class="t" style="top:959.87px;font-size:20px;color:#000;left:1586.70px;transform:scaleX(1.0667);transform-origin:0 0;">11/10/2007</div>
<div class="t" style="top:959.87px;font-size:20px;color:#000;left:1699.50px;">35.3</div>
<div class="t" style="top:988.87px;font-size:20px;color:#000;left:127.15px;">27</div>
<div class="t" style="top:988.87px;font-size:20px;color:#000;left:157.20px;transform:scaleX(0.9317);transform-origin:0 0;">PAL0708</div>
<div class="t" style="top:988.87px;font-size:20px;color:#000;left:448.65px;">27</div>
<div class="t" style="top:988.87px;font-size:20px;color:#000;left:477.90px;transform:scaleX(0.9856);transform-origin:0 0;">Adelie Penguin (Pygoscelis adeliae)</div>
<div class="t" style="top:988.87px;font-size:20px;color:#000;left:864.40px;transform:scaleX(0.9913);transform-origin:0 0;">Anvers</div>
<div class="t" style="top:988.87px;font-size:20px;color:#000;left:960.80px;transform:scaleX(0.9414);transform-origin:0 0;">Biscoe</div>
<div class="t" style="top:988.87px;font-size:20px;color:#000;left:1061.40px;transform:scaleX(0.9504);transform-origin:0 0;">Adult, 1 Egg Stage</div>
<div class="t" style="top:988.87px;font-size:20px;color:#000;left:1231.60px;transform:scaleX(0.9565);transform-origin:0 0;">N17A1</div>
<div class="t" style="top:988.87px;font-size:20px;color:#000;left:1380.30px;transform:scaleX(0.9135);transform-origin:0 0;">Yes</div>
<div class="t" style="top:988.87px;font-size:20px;color:#000;left:1586.70px;transform:scaleX(1.0667);transform-origin:0 0;">11/12/2007</div>
<div class="t" style="top:988.87px;font-size:20px;color:#000;left:1699.50px;">40.6</div>
<div class="t" style="top:1017.87px;font-size:20px;color:#000;left:127.15px;">28</div>
<div class="t" style="top:1017.87px;font-size:20px;color:#000;left:157.20px;transform:scaleX(0.9317);transform-origin:0 0;">PAL0708</div>
<div class="t" style="top:1017.87px;font-size:20px;color:#000;left:448.65px;">28</div>
<div class="t" style="top:1017.87px;font-size:20px;color:#000;left:477.90px;transform:scaleX(0.9856);transform-origin:0 0;">Adelie Penguin (Pygoscelis adeliae)</div>
<div class="t" style="top:1017.87px;font-size:20px;color:#000;left:864.40px;transform:scaleX(0.9913);transform-origin:0 0;">Anvers</div>
<div class="t" style="top:1017.87px;font-size:20px;color:#000;left:960.80px;transform:scaleX(0.9414);transform-origin:0 0;">Biscoe</div>
<div class="t" style="top:1017.87px;font-size:20px;color:#000;left:1061.40px;transform:scaleX(0.9504);transform-origin:0 0;">Adult, 1 Egg Stage</div>
<div class="t" style="top:1017.87px;font-size:20px;color:#000;left:1231.60px;transform:scaleX(0.9565);transform-origin:0 0;">N17A2</div>
<div class="t" style="top:1017.87px;font-size:20px;color:#000;left:1380.30px;transform:scaleX(0.9135);transform-origin:0 0;">Yes</div>
<div class="t" style="top:1017.87px;font-size:20px;color:#000;left:1586.70px;transform:scaleX(1.0667);transform-origin:0 0;">11/12/2007</div>
<div class="t" style="top:1017.87px;font-size:20px;color:#000;left:1699.50px;">40.5</div>
<div class="r" style="left:35px;top:199px;width:115px;height:28px;border:2px solid #0f6b37;box-shadow:inset 0 0 0 1px #fff;"></div>
<div class="r" style="left:149px;top:225px;width:6px;height:6px;background:#0f6b37;box-shadow:-1px -1px 0 0 #fff;"></div>
</div></div>
<div class="r" style="left:1714px;top:172px;width:31px;height:856px;background:#ebe7e8;"></div>
<div class="r" style="left:1717px;top:172px;width:25px;height:858px;background:#f4f4f4;border-radius:12px;"></div>
<svg style="left:0;top:0" width="1" height="1"><path d="M1724 189.2 L1736 189.2 L1730 181.2 Z" fill="#707070" stroke="#707070" stroke-width="1.8" stroke-linejoin="round"/><path d="M1724 1013.8 L1736 1013.8 L1730 1021.8 Z" fill="#707070" stroke="#707070" stroke-width="1.8" stroke-linejoin="round"/></svg>
<div class="r" style="left:1724px;top:198px;width:12px;height:66px;border-radius:6px;background:#737373;"></div>
<div class="r" style="left:0;top:1028px;width:1745px;height:48px;background:#ebe6e6;"></div>
<div class="r" style="left:326px;top:1028px;width:155px;height:42px;background:#fff;border-radius:0 0 7px 7px;"></div>
<div class="r" style="left:314px;top:1028px;width:12px;height:12px;background:#fff;"></div>
<div class="r" style="left:481px;top:1028px;width:12px;height:12px;background:#fff;"></div>
<div class="r" style="left:314px;top:1028px;width:12px;height:12px;background:#ebe6e6;border-radius:0 8px 0 0;"></div>
<div class="r" style="left:481px;top:1028px;width:12px;height:12px;background:#ebe6e6;border-radius:8px 0 0 0;"></div>
<div class="r" style="left:319px;top:1038px;width:1px;height:28px;background:#cfcccc;"></div>
<div class="r" style="left:487px;top:1038px;width:1px;height:28px;background:#cfcccc;"></div>
<div class="r" style="left:586px;top:1038px;width:1px;height:28px;background:#cfcccc;"></div>
<svg style="left:0;top:0" width="1" height="1">
<path d="M41 1044 L32.5 1051 L41 1058" fill="none" stroke="#8a8a8a" stroke-width="1.3"/>
<path d="M81 1044 L89.5 1051 L81 1058" fill="none" stroke="#8a8a8a" stroke-width="1.3"/>
<path d="M658.3 1043.5 V1058.5 M650.8 1051 H665.8" stroke="#333" stroke-width="1.4"/>
</svg>
<div class="t" style="top:1044.07px;font-size:20px;color:#333333;left:178.00px;transform:scaleX(0.9491);transform-origin:0 0;">DEMOSTOCK</div>
<div class="t" style="top:1038.87px;font-size:20px;color:#242424;left:338.00px;transform:scaleX(1.0515);transform-origin:0 0;-webkit-text-stroke:0.35px #242424;">penguins_raw</div>
<div class="r" style="left:338px;top:1063px;width:131px;height:3px;background:#107c41;"></div>
<div class="t" style="top:1044.07px;font-size:20px;color:#333333;left:506.50px;transform:scaleX(0.9546);transform-origin:0 0;">Sheet1</div>
<svg style="left:0;top:0" width="1" height="1">
<rect x="1049.5" y="1045" width="3" height="3" fill="#444"/>
<rect x="1049.5" y="1051" width="3" height="3" fill="#444"/>
<rect x="1049.5" y="1057" width="3" height="3" fill="#444"/>
</svg>
<div class="r" style="left:1075px;top:1038px;width:642px;height:26px;background:#f4f4f4;border-radius:13px;"></div>
<div class="r" style="left:1101px;top:1045px;width:196px;height:12px;background:#737373;border-radius:6px;"></div>
<svg style="left:0;top:0" width="1" height="1">
<path d="M1092.5 1044.5 L1092.5 1057.5 L1083.5 1051 Z" fill="#707070" stroke="#707070" stroke-linejoin="round"/>
<path d="M1699.5 1044.5 L1699.5 1057.5 L1708.5 1051 Z" fill="#707070" stroke="#707070" stroke-linejoin="round"/>
</svg>
<div class="r" style="left:0;top:1076px;width:1745px;height:31px;background:#f3f3f3;"></div>
<div class="t" style="top:1085.80px;font-size:15px;color:#333;left:7.70px;transform:scaleX(0.9639);transform-origin:0 0;">Ready</div>
<svg style="left:0;top:0" width="1" height="1">
<g fill="none" stroke="#1f1f1f" stroke-width="1.25" stroke-linejoin="round" stroke-linecap="round">
<circle cx="87.4" cy="1085.7" r="2.4"/>
<path d="M91.3 1091 L95 1089.6 C96.6 1089 96.8 1087 95.5 1086 C94.8 1085.4 94 1085.4 93 1085.8 L90.2 1087 C88.6 1087.6 86.4 1087.6 84.8 1087 L82 1085.8 C81 1085.4 80.2 1085.4 79.5 1086 C78.2 1087 78.5 1089 80 1089.5 L83 1090.5 C83.8 1090.8 84 1091.3 84 1092 V1095 L82 1100.5 C81.5 1102 82.5 1103 83.5 1103 C84.5 1103 85.2 1102.5 85.5 1101.5 L87.3 1096.4 C87.5 1095.7 88.1 1095.7 88.3 1096.4 L89 1099"/>
<path d="M89.6 1093.2 L98.6 1102.6 M98.6 1093.2 L89.6 1102.6"/>
</g>
</svg>
<div class="t" style="top:1086.10px;font-size:15px;color:#333;left:105.70px;transform:scaleX(1.0156);transform-origin:0 0;">Accessibility: Investigate</div>
<svg style="left:0;top:0" width="1" height="1">
<g fill="none" stroke="#1f1f1f" stroke-width="1.3" stroke-linejoin="round">
<path d="M1125.3 1096.9 H1120.6 V1085.3 H1139.9 V1093.3"/>
<path d="M1140.00 1096.70 L1137.32 1098.85 L1136.80 1102.24 L1133.60 1101.00 L1130.40 1102.24 L1129.88 1098.85 L1127.20 1096.70 L1129.88 1094.55 L1130.40 1091.16 L1133.60 1092.40 L1136.80 1091.16 L1137.32 1094.55 Z"/>
</g>
<circle cx="1133.6" cy="1096.7" r="1.9" fill="#1f1f1f"/>
</svg>
<div class="t" style="top:1086.30px;font-size:15px;color:#333;left:1145.70px;transform:scaleX(1.0200);transform-origin:0 0;">Display Settings</div>
<div class="r" style="left:1283px;top:1077px;width:60px;height:30px;background:#e0e0e0;"></div>
<svg style="left:0;top:0" width="1" height="1">
<g fill="none" stroke="#262626" stroke-width="1.4">
<rect x="1303" y="1083.5" width="18.5" height="17.5"/>
<path d="M1309.2 1083.5 V1101 M1315.3 1083.5 V1101 M1303 1089.3 H1321.5 M1303 1095.2 H1321.5"/>
<rect x="1363.7" y="1083.7" width="18.8" height="17.2"/>
<rect x="1368.2" y="1086.8" width="9.8" height="10.9"/>
<path d="M1370.5 1089.5 H1375.7 M1370.5 1092.4 H1375.7 M1370.5 1095.3 H1375.7"/>
<rect x="1423.7" y="1083.7" width="18.8" height="17.2"/>
<path d="M1423.7 1093.5 H1435 V1083.7 M1429.4 1083.7 V1093.5"/>
</g>
<path d="M1471 1092.6 H1482" stroke="#444" stroke-width="1.2"/>
<path d="M1491 1092.8 H1639" stroke="#666" stroke-width="2.2"/>
<rect x="1561" y="1084" width="8.2" height="16.7" fill="#666"/>
<path d="M1647 1092.8 H1658.3 M1652.6 1087.5 V1098.2" stroke="#444" stroke-width="1.2"/>
</svg>
<div class="t" style="top:1086.00px;font-size:15px;color:#333;left:1678.60px;transform:scaleX(0.9956);transform-origin:0 0;">100%</div>
<svg style="left:0;top:0" width="1" height="1"><path d="M1740.5 0 L1745 0 L1745 7.5 C1744 5 1742.5 2.2 1740.5 0 Z" fill="#0e7a3e"/><path d="M1745 1098.5 L1745 1107 L1740.5 1107 C1742.5 1105 1744.2 1101.5 1745 1098.5 Z" fill="#0e7a3e"/></svg>
</body></html>
